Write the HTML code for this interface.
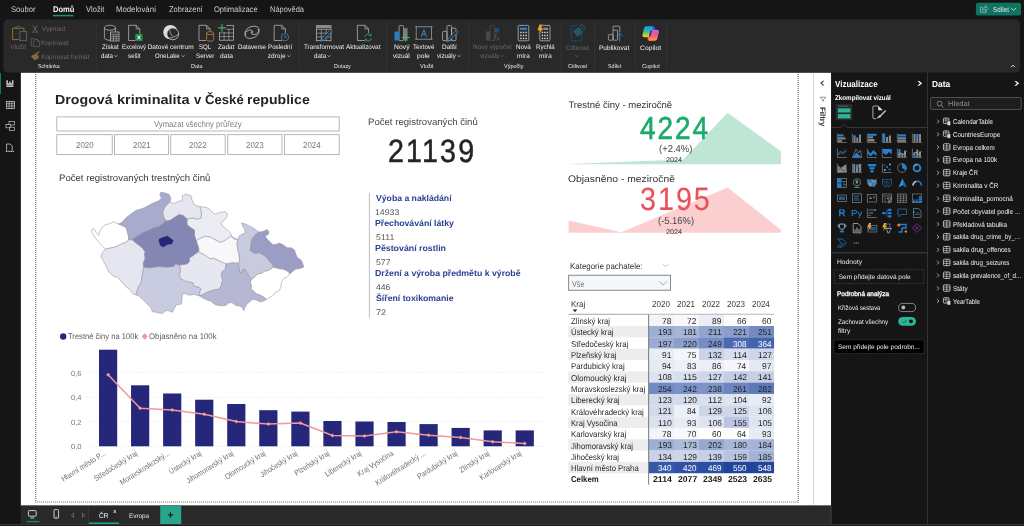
<!DOCTYPE html>
<html lang="cs">
<head>
<meta charset="utf-8">
<title>Drogová kriminalita v České republice</title>
<style>
html,body{margin:0;padding:0;}
body{width:1024px;height:526px;overflow:hidden;background:#151515;font-family:"Liberation Sans",sans-serif;position:relative;}
#app{position:absolute;left:0;top:0;width:1024px;height:526px;overflow:hidden;background:#151515;will-change:transform;}
.t{position:absolute;white-space:nowrap;display:block;text-rendering:geometricPrecision;}
.b{position:absolute;display:block;}
svg{overflow:visible;}
</style>
</head>
<body>
<div id="app">
<svg class="b" style="left:19px;top:71px;" width="795" height="436"><rect x="1.6" y="1.6" width="792.4" height="433" fill="#ffffff"/></svg>
<svg class="b" style="left:0px;top:0px;" width="1024" height="526" viewBox="0 0 1024 526"><path d="M35.7 72V502.600M798.200 72V502.600M35.200 502H798.800" fill="none" stroke="#6c6c6c" stroke-width="1.150" stroke-dasharray="1 1"/></svg>
<span class="t" style="left:55.08px;top:92px;font-size:13.1px;line-height:15px;color:#252423;font-weight:700;transform:scaleX(1.0853);transform-origin:0 50%;">Drogová</span>
<span class="t" style="left:116.56px;top:92px;font-size:13.1px;line-height:15px;color:#252423;font-weight:700;transform:scaleX(1.1068);transform-origin:0 50%;">kriminalita</span>
<span class="t" style="left:193.9px;top:92px;font-size:13.1px;line-height:15px;color:#252423;font-weight:700;">v</span>
<span class="t" style="left:204.97px;top:92px;font-size:13.1px;line-height:15px;color:#252423;font-weight:700;transform:scaleX(1.0037);transform-origin:0 50%;">České</span>
<span class="t" style="left:247.48px;top:92px;font-size:13.1px;line-height:15px;color:#252423;font-weight:700;transform:scaleX(1.0775);transform-origin:0 50%;">republice</span>
<svg class="b" style="left:55px;top:115px;" width="286" height="18"><rect x="1.8" y="1.9" width="282.4" height="14.1" fill="#fff" stroke="#a6a6a6" stroke-width="0.8"/></svg>
<span class="t" style="left:154.1px;top:119px;font-size:8.7px;line-height:10px;color:#808080;transform:scaleX(0.8845);transform-origin:0 50%;">Vymazat všechny průřezy</span>
<svg class="b" style="left:55px;top:133px;" width="59" height="23"><rect x="1.8" y="1.7" width="55.4" height="19.7" fill="#fff" stroke="#a6a6a6" stroke-width="0.8"/></svg>
<span class="t" style="left:75.6px;top:140px;font-size:8.6px;line-height:10px;color:#777;transform:scaleX(0.9237);transform-origin:0 50%;">2020</span>
<svg class="b" style="left:113px;top:133px;" width="57" height="23"><rect x="1.5" y="1.7" width="53.9" height="19.7" fill="#fff" stroke="#a6a6a6" stroke-width="0.8"/></svg>
<span class="t" style="left:132.55px;top:140px;font-size:8.6px;line-height:10px;color:#777;transform:scaleX(0.9280);transform-origin:0 50%;">2021</span>
<svg class="b" style="left:169px;top:133px;" width="58" height="23"><rect x="1.7" y="1.7" width="54.5" height="19.7" fill="#fff" stroke="#a6a6a6" stroke-width="0.8"/></svg>
<span class="t" style="left:189.05px;top:140px;font-size:8.6px;line-height:10px;color:#777;transform:scaleX(0.9280);transform-origin:0 50%;">2022</span>
<svg class="b" style="left:226px;top:133px;" width="58" height="23"><rect x="1.8" y="1.7" width="54.2" height="19.7" fill="#fff" stroke="#a6a6a6" stroke-width="0.8"/></svg>
<span class="t" style="left:246px;top:140px;font-size:8.6px;line-height:10px;color:#777;transform:scaleX(0.9259);transform-origin:0 50%;">2023</span>
<svg class="b" style="left:283px;top:133px;" width="58" height="23"><rect x="1.4" y="1.7" width="54.8" height="19.7" fill="#fff" stroke="#a6a6a6" stroke-width="0.8"/></svg>
<span class="t" style="left:302.9px;top:140px;font-size:8.6px;line-height:10px;color:#777;transform:scaleX(0.9194);transform-origin:0 50%;">2024</span>
<span class="t" style="left:58.83px;top:173px;font-size:9.5px;line-height:11px;color:#3a3a3a;transform:scaleX(1.0096);transform-origin:0 50%;">Počet registrovaných trestných činů</span>
<svg class="b" style="left:0px;top:0px;pointer-events:none;" width="1024" height="526" viewBox="0 0 1024 526"><path d="M118.5 224.0L113.7 221.7L109.6 223.7L105.5 224.7L102.1 227.4L99.4 231.5L98.7 235.4L96.6 233.2L94.9 229.9L92.9 228.5L91.2 231.3L93.2 234.3L94.9 237.7L98.0 241.1L101.4 245.2L105.5 249.0L109.6 248.2L114.4 247.3L117.8 245.9L122.0 243.6L126.1 242.2L128.8 239.7L128.5 236.3L127.4 231.5L126.1 227.4L122.0 225.4Z" fill="#ffffff" stroke="#92929c" stroke-width="0.55" stroke-linejoin="round"/><path d="M105.5 249.0L109.6 248.2L114.4 247.3L117.8 245.9L122.0 243.6L126.1 242.2L128.8 239.7L132.2 239.7L137.0 243.8L142.5 248.0L145.2 252.1L145.9 250.7L144.5 254.1L145.2 258.2L143.2 263.7L143.8 267.1L142.5 274.6L141.1 282.8L138.4 287.0L137.0 291.1L135.9 294.9L132.9 293.8L130.2 289.7L126.1 287.0L122.0 282.2L117.8 277.4L113.1 276.0L108.9 271.9L105.5 265.1L102.8 259.6L100.7 256.2L102.8 252.1Z" fill="#e5e6f0" stroke="#92929c" stroke-width="0.55" stroke-linejoin="round"/><path d="M143.8 267.1L149.3 267.8L158.9 266.4L167.1 267.1L174.0 266.4L175.3 263.7L179.4 265.1L180.8 270.5L179.4 274.6L180.8 278.7L186.3 281.5L187.7 281.5L193.2 282.8L193.9 286.3L198.7 287.0L201.4 289.0L200.1 291.1L199.4 295.8L194.5 294.5L189.0 295.2L183.5 293.1L182.2 296.5L181.5 304.1L176.7 304.7L174.0 308.8L172.6 312.3L167.1 310.2L161.6 313.6L156.2 312.3L152.1 311.6L151.4 308.2L146.6 303.4L142.5 299.3L138.4 295.8L135.9 294.9L137.0 291.1L138.4 287.0L141.1 282.8L142.5 274.6Z" fill="#c9cbe0" stroke="#92929c" stroke-width="0.55" stroke-linejoin="round"/><path d="M179.4 265.1L187.6 263.7L189.7 260.9L189.0 258.2L193.1 255.5L198.6 251.4L198.7 252.0L205.5 255.4L210.3 258.8L213.7 258.1L219.2 260.8L226.1 263.9L225.4 269.2L222.0 271.9L221.3 276.0L222.6 280.1L221.3 285.6L219.2 289.0L212.4 290.4L206.9 292.4L201.4 295.2L199.4 295.8L200.1 291.1L201.4 289.0L198.7 287.0L193.9 286.3L193.2 282.8L187.7 281.5L186.3 281.5L180.8 278.7L179.4 274.6L180.8 270.5Z" fill="#e6e7f1" stroke="#92929c" stroke-width="0.55" stroke-linejoin="round"/><path d="M198.7 252.0L198.7 247.8L195.3 241.0L200.1 238.3L205.5 236.2L210.3 236.9L215.1 239.6L220.6 242.4L226.1 239.6L230.8 236.2L234.3 238.9L237.7 239.6L237.0 244.4L237.7 249.2L239.1 254.7L239.7 260.2L238.4 263.6L237.7 263.2L231.5 262.9L226.1 263.9L219.2 260.8L213.7 258.1L210.3 258.8L205.5 255.4Z" fill="#f8f8fb" stroke="#92929c" stroke-width="0.55" stroke-linejoin="round"/><path d="M200.0 206.9L204.1 206.9L208.9 208.3L210.9 211.0L215.0 214.4L219.8 212.4L223.9 211.7L224.7 211.6L227.4 213.6L226.7 217.1L224.7 219.8L220.6 223.2L222.6 225.9L226.1 228.7L230.2 232.8L232.2 236.9L237.7 239.6L234.3 238.9L230.8 236.2L226.1 239.6L220.6 242.4L215.1 239.6L210.3 236.9L205.5 236.2L200.1 238.3L195.3 241.0L194.5 235.6L194.5 230.2L190.4 227.4L187.0 224.7L187.0 219.2L189.0 218.5L193.1 217.8L197.2 219.2L201.3 217.8L201.3 212.4Z" fill="#ecedf4" stroke="#92929c" stroke-width="0.55" stroke-linejoin="round"/><path d="M169.9 202.1L174.0 203.5L178.1 201.4L182.2 200.7L182.4 195.7L186.3 194.0L191.1 195.9L192.0 200.1L194.5 204.8L200.0 206.9L201.3 212.4L201.3 217.8L197.2 219.2L193.1 217.8L189.0 218.5L187.0 219.2L183.5 215.8L179.4 214.4L174.0 217.8L169.9 220.6L166.0 220.9L163.7 217.2L162.7 212.4L164.4 207.6L167.1 204.2Z" fill="#e5e6f0" stroke="#92929c" stroke-width="0.55" stroke-linejoin="round"/><path d="M274.0 267.1L276.0 267.8L279.4 268.7L283.5 269.2L287.6 271.2L290.1 273.9L287.6 276.7L283.5 278.7L281.5 282.2L280.8 287.0L279.4 290.4L275.3 292.4L273.3 295.2L269.9 297.2L266.4 299.5L263.7 297.2L260.3 295.2L256.2 293.8L252.7 290.4L250.7 289.0L251.4 285.6L250.0 282.8L251.4 279.4L253.4 278.1L255.5 276.0L257.5 273.9L261.6 273.3L264.4 271.2L268.5 270.5L271.2 268.5Z" fill="#ffffff" stroke="#92929c" stroke-width="0.55" stroke-linejoin="round"/><path d="M241.4 222.9L245.2 223.9L249.3 225.9L253.4 228.0L256.2 230.1L258.9 232.1L256.2 234.2L253.4 236.9L251.4 241.0L250.7 246.5L250.4 250.6L253.4 252.6L256.2 253.3L259.6 252.6L263.0 254.7L267.1 257.4L269.2 260.8L271.9 263.6L274.0 267.0L271.2 268.4L268.5 270.4L264.4 271.1L261.6 273.2L257.5 273.8L255.5 275.9L253.4 278.0L251.4 279.0L249.3 276.6L246.6 272.5L244.5 269.1L242.5 269.7L241.8 273.2L239.7 272.5L239.1 268.4L238.4 263.6L239.7 260.2L239.1 254.7L237.7 249.2L237.0 244.4L237.7 239.6L239.7 235.5L245.2 232.8L244.5 228.7L242.5 225.9Z" fill="#c8cadf" stroke="#92929c" stroke-width="0.55" stroke-linejoin="round"/><path d="M226.1 264.4L231.5 263.0L237.7 263.3L238.4 263.7L239.1 268.5L239.7 272.6L241.8 273.3L242.5 269.8L244.5 269.2L246.6 272.6L249.3 276.7L251.4 279.4L250.0 282.8L251.4 285.6L250.7 289.0L252.7 290.4L256.2 293.8L260.3 295.2L263.7 297.2L266.4 299.5L263.0 301.3L259.6 301.7L256.2 300.0L252.7 299.3L249.3 302.0L246.6 304.7L244.5 308.2L243.6 310.9L242.5 307.5L239.7 306.1L235.6 305.4L232.2 302.7L228.8 302.7L226.1 305.4L220.6 305.8L215.1 304.7L211.0 301.3L206.9 300.0L202.8 297.9L199.4 295.8L201.4 295.2L206.9 292.4L212.4 290.4L219.2 289.0L221.3 285.6L222.6 280.1L221.3 276.0L222.0 271.9L225.4 269.2Z" fill="#b5b7d5" stroke="#92929c" stroke-width="0.55" stroke-linejoin="round"/><path d="M258.9 232.1L263.0 231.4L267.1 229.4L268.8 231.4L268.5 234.2L265.1 236.2L267.1 238.9L269.9 241.7L272.6 244.4L276.0 244.4L279.4 243.1L283.5 245.1L287.0 247.8L291.1 247.8L294.5 249.9L295.6 253.3L297.2 257.4L301.3 260.2L302.7 263.6L303.8 267.0L300.0 268.4L295.9 269.1L293.1 271.1L290.1 273.8L287.6 271.1L283.5 269.1L279.4 268.6L276.0 267.7L274.0 267.0L271.9 263.6L269.2 260.8L267.1 257.4L263.0 254.7L259.6 252.6L256.2 253.3L253.4 252.6L250.4 250.6L250.7 246.5L251.4 241.0L253.4 236.9L256.2 234.2Z" fill="#9b9dc4" stroke="#92929c" stroke-width="0.55" stroke-linejoin="round"/><path d="M118.5 224.0L122.0 222.2L126.1 217.8L130.2 214.4L136.3 210.3L142.5 208.5L147.3 206.2L152.1 203.5L158.9 200.7L161.6 198.0L159.6 194.9L161.0 192.1L165.7 193.2L169.2 194.6L170.9 198.7L169.9 202.1L167.1 204.2L164.4 207.6L162.7 212.4L163.7 217.2L166.0 220.9L162.3 224.0L158.9 226.7L153.4 228.1L149.3 229.9L142.5 232.9L137.0 236.3L132.2 239.7L128.8 239.7L128.5 236.3L127.4 231.5L126.1 227.4L122.0 225.4Z" fill="#a9abcd" stroke="#92929c" stroke-width="0.55" stroke-linejoin="round"/><path d="M132.2 239.7L137.0 236.3L142.5 232.9L149.3 229.9L153.4 228.1L158.9 226.7L162.3 224.0L166.0 220.9L169.9 220.6L174.0 217.8L179.4 214.4L183.5 215.8L187.0 219.2L187.0 224.7L190.4 227.4L194.5 230.2L194.5 235.6L195.9 239.7L197.9 245.2L198.9 249.3L198.6 251.4L193.1 255.5L189.0 258.2L189.7 260.9L187.6 263.7L179.4 265.1L175.3 263.7L174.0 266.4L167.1 267.1L158.9 266.4L149.3 267.8L143.8 267.1L143.2 263.7L145.2 258.2L144.5 254.1L145.9 250.7L145.2 252.1L142.5 248.0L137.0 243.8Z" fill="#8486b4" stroke="#92929c" stroke-width="0.55" stroke-linejoin="round"/><path d="M158.6 238.7L162.6 237.1L167.4 235.5L170.6 237.9L173.8 240.3L172.2 244.3L167.4 245.1L163.4 247.5L160.2 245.9L158.6 241.9Z" fill="#25257a" stroke="#92929c" stroke-width="0.55" stroke-linejoin="round"/></svg>
<span class="t" style="left:368.23px;top:117px;font-size:9.5px;line-height:11px;color:#444;transform:scaleX(1.0093);transform-origin:0 50%;">Počet registrovaných činů</span>
<span class="t" style="left:387.67px;top:133px;font-size:32.4px;line-height:36px;color:#252423;letter-spacing:2.4px;transform:scaleX(0.8857);transform-origin:0 50%;-webkit-text-stroke:0.5px #252423;">21139</span>
<svg class="b" style="left:367px;top:192px;" width="4" height="127"><rect x="1.9" y="1.2" width="0.9" height="124.7" fill="#b8b8b8"/></svg>
<span class="t" style="left:375.96px;top:193px;font-size:8.6px;line-height:10px;color:#2b4192;font-weight:700;transform:scaleX(1.0073);transform-origin:0 50%;">Výoba a nakládání</span>
<span class="t" style="left:375.34px;top:208px;font-size:8.2px;line-height:9px;color:#555;transform:scaleX(1.0662);transform-origin:0 50%;">14933</span>
<span class="t" style="left:375.43px;top:218px;font-size:8.6px;line-height:10px;color:#2b4192;font-weight:700;transform:scaleX(1.0135);transform-origin:0 50%;">Přechovávání látky</span>
<span class="t" style="left:375.65px;top:233px;font-size:8.2px;line-height:9px;color:#555;transform:scaleX(1.0786);transform-origin:0 50%;">5111</span>
<span class="t" style="left:375.43px;top:243px;font-size:8.6px;line-height:10px;color:#2b4192;font-weight:700;transform:scaleX(1.0250);transform-origin:0 50%;">Pěstování rostlin</span>
<span class="t" style="left:375.65px;top:258px;font-size:8.2px;line-height:9px;color:#555;transform:scaleX(1.0574);transform-origin:0 50%;">577</span>
<span class="t" style="left:375.43px;top:268px;font-size:8.6px;line-height:10px;color:#2b4192;font-weight:700;transform:scaleX(1.0158);transform-origin:0 50%;">Držení a výroba předmětu k výrobě</span>
<span class="t" style="left:375.83px;top:283px;font-size:8.2px;line-height:9px;color:#555;transform:scaleX(1.0562);transform-origin:0 50%;">446</span>
<span class="t" style="left:375.78px;top:293px;font-size:8.6px;line-height:10px;color:#2b4192;font-weight:700;transform:scaleX(1.0147);transform-origin:0 50%;">Šíření toxikomanie</span>
<span class="t" style="left:375.54px;top:308px;font-size:8.2px;line-height:9px;color:#555;transform:scaleX(1.1174);transform-origin:0 50%;">72</span>
<svg class="b" style="left:0px;top:0px;" width="1024" height="526" viewBox="0 0 1024 526"><path d="M568.6 164L683.4 159.4L727.6 112.8L780.9 151.3V164.2H568.6z" fill="#bfe6d4"/><path d="M568.6 220.6L621.3 232.2L727.6 187.5L780.9 229.7V232.7H568.6z" fill="#fbcfd0"/></svg>
<span class="t" style="left:568.41px;top:100px;font-size:9.5px;line-height:11px;color:#333;">Trestné činy - meziročně</span>
<span class="t" style="left:640.44px;top:110px;font-size:31.8px;line-height:36px;color:#1aab6b;letter-spacing:2.2px;transform:scaleX(0.8811);transform-origin:0 50%;-webkit-text-stroke:0.6px #1aab6b;">4224</span>
<span class="t" style="left:659.03px;top:144px;font-size:10px;line-height:11px;color:#444;transform:scaleX(0.9443);transform-origin:0 50%;">(+2.4%)</span>
<span class="t" style="left:666.44px;top:157px;font-size:6.8px;line-height:7px;color:#333;transform:scaleX(1.0670);transform-origin:0 50%;">2024</span>
<span class="t" style="left:568.13px;top:174px;font-size:9.5px;line-height:11px;color:#333;transform:scaleX(1.0891);transform-origin:0 50%;">Objasněno - meziročně</span>
<span class="t" style="left:639.59px;top:181px;font-size:32.2px;line-height:36px;color:#e8505b;letter-spacing:2.2px;transform:scaleX(0.8928);transform-origin:0 50%;-webkit-text-stroke:0.15px #e8505b;">3195</span>
<span class="t" style="left:657.74px;top:216px;font-size:10px;line-height:11px;color:#444;transform:scaleX(0.9394);transform-origin:0 50%;">(-5.16%)</span>
<span class="t" style="left:666.44px;top:229px;font-size:6.8px;line-height:7px;color:#333;transform:scaleX(1.0670);transform-origin:0 50%;">2024</span>
<span class="t" style="left:569.77px;top:261px;font-size:8.6px;line-height:10px;color:#333;transform:scaleX(0.9207);transform-origin:0 50%;">Kategorie pachatele:</span>
<svg class="b" style="left:661px;top:262px;" width="9" height="6" viewBox="0 0 9 6"><path d="M1.800 2L4.700 4.500L7.600 2" fill="none" stroke="#888" stroke-width="0.500"/></svg>
<svg class="b" style="left:567px;top:273px;" width="105" height="19"><rect x="1.65" y="2.25" width="101.8" height="15" fill="#f4f8fb" stroke="#7c7c7c" stroke-width="0.9"/></svg>
<span class="t" style="left:571.8px;top:279px;font-size:8.6px;line-height:10px;color:#777;transform:scaleX(0.8375);transform-origin:0 50%;">Vše</span>
<svg class="b" style="left:658px;top:279px;" width="10" height="8" viewBox="0 0 10 8"><path d="M1.400 2.300L5.100 6.100L8.900 2.300" fill="none" stroke="#777" stroke-width="0.600"/></svg>
<span class="t" style="left:570.96px;top:299px;font-size:8.7px;line-height:10px;color:#333;transform:scaleX(0.9167);transform-origin:0 50%;">Kraj</span>
<svg class="b" style="left:571.5px;top:308.8px;" width="6" height="4" viewBox="0 0 6 4"><path d="M0.700 0.600H5.300L3 3.200z" fill="#222"/></svg>
<span class="t" style="left:652px;top:299px;font-size:8.7px;line-height:10px;color:#3a3a3a;transform:scaleX(0.9238);transform-origin:0 50%;">2020</span>
<span class="t" style="left:677px;top:299px;font-size:8.7px;line-height:10px;color:#3a3a3a;transform:scaleX(0.9282);transform-origin:0 50%;">2021</span>
<span class="t" style="left:702px;top:299px;font-size:8.7px;line-height:10px;color:#3a3a3a;transform:scaleX(0.9282);transform-origin:0 50%;">2022</span>
<span class="t" style="left:727px;top:299px;font-size:8.7px;line-height:10px;color:#3a3a3a;transform:scaleX(0.9260);transform-origin:0 50%;">2023</span>
<span class="t" style="left:752px;top:299px;font-size:8.7px;line-height:10px;color:#3a3a3a;transform:scaleX(0.9195);transform-origin:0 50%;">2024</span>
<svg class="b" style="left:567px;top:312px;" width="209" height="4"><rect x="1.6" y="1.8" width="205.6" height="0.9" fill="#999999"/></svg>
<span class="t" style="left:571.37px;top:316px;font-size:8.5px;line-height:10px;color:#2a2a2a;transform:scaleX(0.9084);transform-origin:0 50%;">Zlínský kraj</span>
<svg class="b" style="left:648px;top:313px;" width="28" height="15"><rect x="1" y="1.7" width="25.05" height="11.37" fill="#f2f4f9"/></svg>
<span class="t" style="left:662.38px;top:316px;font-size:8.5px;line-height:10px;color:#252423;transform:scaleX(0.9919);transform-origin:0 50%;">78</span>
<svg class="b" style="left:673px;top:313px;" width="28" height="15"><rect x="1" y="1.7" width="25.05" height="11.37" fill="#f6f8fb"/></svg>
<span class="t" style="left:687.38px;top:316px;font-size:8.5px;line-height:10px;color:#252423;transform:scaleX(0.9968);transform-origin:0 50%;">72</span>
<svg class="b" style="left:698px;top:313px;" width="28" height="15"><rect x="1" y="1.7" width="25.05" height="11.37" fill="#eaedf6"/></svg>
<span class="t" style="left:712.46px;top:316px;font-size:8.5px;line-height:10px;color:#252423;transform:scaleX(0.9871);transform-origin:0 50%;">89</span>
<svg class="b" style="left:723px;top:313px;" width="28" height="15"><rect x="1" y="1.7" width="25.05" height="11.37" fill="#fbfbfd"/></svg>
<span class="t" style="left:737.38px;top:316px;font-size:8.5px;line-height:10px;color:#252423;transform:scaleX(0.9919);transform-origin:0 50%;">66</span>
<svg class="b" style="left:748px;top:313px;" width="28" height="15"><rect x="1" y="1.7" width="25.05" height="11.37" fill="#ffffff"/></svg>
<span class="t" style="left:762.38px;top:316px;font-size:8.5px;line-height:10px;color:#252423;transform:scaleX(0.9871);transform-origin:0 50%;">60</span>
<svg class="b" style="left:567px;top:325px;" width="83" height="14"><rect x="1.3" y="1.02" width="80.3" height="11.32" fill="#ededed"/></svg>
<span class="t" style="left:571.01px;top:327px;font-size:8.5px;line-height:10px;color:#2a2a2a;transform:scaleX(0.9181);transform-origin:0 50%;">Ústecký kraj</span>
<svg class="b" style="left:648px;top:325px;" width="28" height="14"><rect x="1" y="1.02" width="25.05" height="11.37" fill="#9eafd5"/></svg>
<span class="t" style="left:657.77px;top:327px;font-size:8.5px;line-height:10px;color:#252423;transform:scaleX(0.9867);transform-origin:0 50%;">193</span>
<svg class="b" style="left:673px;top:325px;" width="28" height="14"><rect x="1" y="1.02" width="25.05" height="11.37" fill="#a7b6d8"/></svg>
<span class="t" style="left:682.77px;top:327px;font-size:8.5px;line-height:10px;color:#252423;transform:scaleX(0.9899);transform-origin:0 50%;">181</span>
<svg class="b" style="left:698px;top:325px;" width="28" height="14"><rect x="1" y="1.02" width="25.05" height="11.37" fill="#91a4cf"/></svg>
<span class="t" style="left:707.97px;top:327px;font-size:8.5px;line-height:10px;color:#252423;transform:scaleX(1.0196);transform-origin:0 50%;">211</span>
<svg class="b" style="left:723px;top:325px;" width="28" height="14"><rect x="1" y="1.02" width="25.05" height="11.37" fill="#899ecc"/></svg>
<span class="t" style="left:732.99px;top:327px;font-size:8.5px;line-height:10px;color:#252423;transform:scaleX(0.9741);transform-origin:0 50%;">221</span>
<svg class="b" style="left:748px;top:325px;" width="28" height="14"><rect x="1" y="1.02" width="25.05" height="11.37" fill="#748bc2"/></svg>
<span class="t" style="left:757.99px;top:327px;font-size:8.5px;line-height:10px;color:#252423;transform:scaleX(0.9741);transform-origin:0 50%;">251</span>
<span class="t" style="left:571.25px;top:339px;font-size:8.5px;line-height:10px;color:#2a2a2a;transform:scaleX(0.9131);transform-origin:0 50%;">Středočeský kraj</span>
<svg class="b" style="left:648px;top:336px;" width="28" height="14"><rect x="1" y="1.34" width="25.05" height="11.37" fill="#9bacd3"/></svg>
<span class="t" style="left:657.77px;top:339px;font-size:8.5px;line-height:10px;color:#252423;transform:scaleX(0.9899);transform-origin:0 50%;">197</span>
<svg class="b" style="left:673px;top:336px;" width="28" height="14"><rect x="1" y="1.34" width="25.05" height="11.37" fill="#8a9ecc"/></svg>
<span class="t" style="left:682.99px;top:339px;font-size:8.5px;line-height:10px;color:#252423;transform:scaleX(0.9680);transform-origin:0 50%;">220</span>
<svg class="b" style="left:698px;top:336px;" width="28" height="14"><rect x="1" y="1.34" width="25.05" height="11.37" fill="#758dc3"/></svg>
<span class="t" style="left:707.99px;top:339px;font-size:8.5px;line-height:10px;color:#252423;transform:scaleX(0.9741);transform-origin:0 50%;">249</span>
<svg class="b" style="left:723px;top:336px;" width="28" height="14"><rect x="1" y="1.34" width="25.05" height="11.37" fill="#4a69b0"/></svg>
<span class="t" style="left:733.11px;top:339px;font-size:8.5px;line-height:10px;color:#fff;transform:scaleX(0.9619);transform-origin:0 50%;">308</span>
<svg class="b" style="left:748px;top:336px;" width="28" height="14"><rect x="1" y="1.34" width="25.05" height="11.37" fill="#4364ac"/></svg>
<span class="t" style="left:758.12px;top:339px;font-size:8.5px;line-height:10px;color:#fff;transform:scaleX(0.9529);transform-origin:0 50%;">364</span>
<svg class="b" style="left:567px;top:347px;" width="83" height="14"><rect x="1.3" y="1.66" width="80.3" height="11.32" fill="#ededed"/></svg>
<span class="t" style="left:570.98px;top:350px;font-size:8.5px;line-height:10px;color:#2a2a2a;transform:scaleX(0.9072);transform-origin:0 50%;">Plzeňský kraj</span>
<svg class="b" style="left:648px;top:347px;" width="28" height="15"><rect x="1" y="1.66" width="25.05" height="11.37" fill="#e8ecf5"/></svg>
<span class="t" style="left:662.42px;top:350px;font-size:8.5px;line-height:10px;color:#252423;transform:scaleX(0.9919);transform-origin:0 50%;">91</span>
<svg class="b" style="left:673px;top:347px;" width="28" height="15"><rect x="1" y="1.66" width="25.05" height="11.37" fill="#f4f6fa"/></svg>
<span class="t" style="left:687.38px;top:350px;font-size:8.5px;line-height:10px;color:#252423;transform:scaleX(0.9919);transform-origin:0 50%;">75</span>
<svg class="b" style="left:698px;top:347px;" width="28" height="15"><rect x="1" y="1.66" width="25.05" height="11.37" fill="#cad3e8"/></svg>
<span class="t" style="left:707.77px;top:350px;font-size:8.5px;line-height:10px;color:#252423;transform:scaleX(0.9899);transform-origin:0 50%;">132</span>
<svg class="b" style="left:723px;top:347px;" width="28" height="15"><rect x="1" y="1.66" width="25.05" height="11.37" fill="#d8deee"/></svg>
<span class="t" style="left:732.75px;top:350px;font-size:8.5px;line-height:10px;color:#252423;transform:scaleX(1.0230);transform-origin:0 50%;">114</span>
<svg class="b" style="left:748px;top:347px;" width="28" height="15"><rect x="1" y="1.66" width="25.05" height="11.37" fill="#ced6ea"/></svg>
<span class="t" style="left:757.77px;top:350px;font-size:8.5px;line-height:10px;color:#252423;transform:scaleX(0.9899);transform-origin:0 50%;">127</span>
<span class="t" style="left:570.97px;top:361px;font-size:8.5px;line-height:10px;color:#2a2a2a;transform:scaleX(0.9232);transform-origin:0 50%;">Pardubický kraj</span>
<svg class="b" style="left:648px;top:358px;" width="28" height="15"><rect x="1" y="1.98" width="25.05" height="11.37" fill="#e6eaf4"/></svg>
<span class="t" style="left:662.43px;top:361px;font-size:8.5px;line-height:10px;color:#252423;transform:scaleX(0.9729);transform-origin:0 50%;">94</span>
<svg class="b" style="left:673px;top:358px;" width="28" height="15"><rect x="1" y="1.98" width="25.05" height="11.37" fill="#eef1f8"/></svg>
<span class="t" style="left:687.47px;top:361px;font-size:8.5px;line-height:10px;color:#252423;transform:scaleX(0.9823);transform-origin:0 50%;">83</span>
<svg class="b" style="left:698px;top:358px;" width="28" height="15"><rect x="1" y="1.98" width="25.05" height="11.37" fill="#eceff7"/></svg>
<span class="t" style="left:712.47px;top:361px;font-size:8.5px;line-height:10px;color:#252423;transform:scaleX(0.9823);transform-origin:0 50%;">86</span>
<svg class="b" style="left:723px;top:358px;" width="28" height="15"><rect x="1" y="1.98" width="25.05" height="11.37" fill="#f5f7fb"/></svg>
<span class="t" style="left:737.38px;top:361px;font-size:8.5px;line-height:10px;color:#252423;transform:scaleX(0.9776);transform-origin:0 50%;">74</span>
<svg class="b" style="left:748px;top:358px;" width="28" height="15"><rect x="1" y="1.98" width="25.05" height="11.37" fill="#e4e9f3"/></svg>
<span class="t" style="left:762.42px;top:361px;font-size:8.5px;line-height:10px;color:#252423;transform:scaleX(0.9919);transform-origin:0 50%;">97</span>
<svg class="b" style="left:567px;top:370px;" width="83" height="14"><rect x="1.3" y="1.3" width="80.3" height="11.32" fill="#ededed"/></svg>
<span class="t" style="left:571.24px;top:373px;font-size:8.5px;line-height:10px;color:#2a2a2a;transform:scaleX(0.9474);transform-origin:0 50%;">Olomoucký kraj</span>
<svg class="b" style="left:648px;top:370px;" width="28" height="14"><rect x="1" y="1.3" width="25.05" height="11.37" fill="#dce2f0"/></svg>
<span class="t" style="left:657.77px;top:372px;font-size:8.5px;line-height:10px;color:#252423;transform:scaleX(0.9867);transform-origin:0 50%;">108</span>
<svg class="b" style="left:673px;top:370px;" width="28" height="14"><rect x="1" y="1.3" width="25.05" height="11.37" fill="#d7deed"/></svg>
<span class="t" style="left:682.74px;top:372px;font-size:8.5px;line-height:10px;color:#252423;transform:scaleX(1.0334);transform-origin:0 50%;">115</span>
<svg class="b" style="left:698px;top:370px;" width="28" height="14"><rect x="1" y="1.3" width="25.05" height="11.37" fill="#ced6ea"/></svg>
<span class="t" style="left:707.77px;top:372px;font-size:8.5px;line-height:10px;color:#252423;transform:scaleX(0.9899);transform-origin:0 50%;">127</span>
<svg class="b" style="left:723px;top:370px;" width="28" height="14"><rect x="1" y="1.3" width="25.05" height="11.37" fill="#c3cde5"/></svg>
<span class="t" style="left:732.77px;top:372px;font-size:8.5px;line-height:10px;color:#252423;transform:scaleX(0.9899);transform-origin:0 50%;">142</span>
<svg class="b" style="left:748px;top:370px;" width="28" height="14"><rect x="1" y="1.3" width="25.05" height="11.37" fill="#c4cee5"/></svg>
<span class="t" style="left:757.77px;top:372px;font-size:8.5px;line-height:10px;color:#252423;transform:scaleX(0.9899);transform-origin:0 50%;">141</span>
<span class="t" style="left:570.97px;top:384px;font-size:8.5px;line-height:10px;color:#2a2a2a;transform:scaleX(0.9193);transform-origin:0 50%;">Moravskoslezský kraj</span>
<svg class="b" style="left:648px;top:381px;" width="28" height="14"><rect x="1" y="1.62" width="25.05" height="11.37" fill="#718ac1"/></svg>
<span class="t" style="left:657.99px;top:384px;font-size:8.5px;line-height:10px;color:#252423;transform:scaleX(0.9619);transform-origin:0 50%;">254</span>
<svg class="b" style="left:673px;top:381px;" width="28" height="14"><rect x="1" y="1.62" width="25.05" height="11.37" fill="#7a91c5"/></svg>
<span class="t" style="left:682.99px;top:384px;font-size:8.5px;line-height:10px;color:#252423;transform:scaleX(0.9741);transform-origin:0 50%;">242</span>
<svg class="b" style="left:698px;top:381px;" width="28" height="14"><rect x="1" y="1.62" width="25.05" height="11.37" fill="#7d93c6"/></svg>
<span class="t" style="left:707.99px;top:384px;font-size:8.5px;line-height:10px;color:#252423;transform:scaleX(0.9711);transform-origin:0 50%;">238</span>
<svg class="b" style="left:723px;top:381px;" width="28" height="14"><rect x="1" y="1.62" width="25.05" height="11.37" fill="#6c85bf"/></svg>
<span class="t" style="left:732.99px;top:384px;font-size:8.5px;line-height:10px;color:#252423;transform:scaleX(0.9741);transform-origin:0 50%;">261</span>
<svg class="b" style="left:748px;top:381px;" width="28" height="14"><rect x="1" y="1.62" width="25.05" height="11.37" fill="#5d79b8"/></svg>
<span class="t" style="left:757.99px;top:384px;font-size:8.5px;line-height:10px;color:#252423;transform:scaleX(0.9741);transform-origin:0 50%;">282</span>
<svg class="b" style="left:567px;top:392px;" width="83" height="15"><rect x="1.3" y="1.94" width="80.3" height="11.32" fill="#ededed"/></svg>
<span class="t" style="left:570.97px;top:395px;font-size:8.5px;line-height:10px;color:#2a2a2a;transform:scaleX(0.9263);transform-origin:0 50%;">Liberecký kraj</span>
<svg class="b" style="left:648px;top:392px;" width="28" height="15"><rect x="1" y="1.94" width="25.05" height="11.37" fill="#d1d9eb"/></svg>
<span class="t" style="left:657.77px;top:395px;font-size:8.5px;line-height:10px;color:#252423;transform:scaleX(0.9867);transform-origin:0 50%;">123</span>
<svg class="b" style="left:673px;top:392px;" width="28" height="15"><rect x="1" y="1.94" width="25.05" height="11.37" fill="#d3dbec"/></svg>
<span class="t" style="left:682.77px;top:395px;font-size:8.5px;line-height:10px;color:#252423;transform:scaleX(0.9835);transform-origin:0 50%;">120</span>
<svg class="b" style="left:698px;top:392px;" width="28" height="15"><rect x="1" y="1.94" width="25.05" height="11.37" fill="#d9e0ee"/></svg>
<span class="t" style="left:707.74px;top:395px;font-size:8.5px;line-height:10px;color:#252423;transform:scaleX(1.0369);transform-origin:0 50%;">112</span>
<svg class="b" style="left:723px;top:392px;" width="28" height="15"><rect x="1" y="1.94" width="25.05" height="11.37" fill="#dfe4f1"/></svg>
<span class="t" style="left:732.78px;top:395px;font-size:8.5px;line-height:10px;color:#252423;transform:scaleX(0.9773);transform-origin:0 50%;">104</span>
<svg class="b" style="left:748px;top:392px;" width="28" height="15"><rect x="1" y="1.94" width="25.05" height="11.37" fill="#e8ecf5"/></svg>
<span class="t" style="left:762.42px;top:395px;font-size:8.5px;line-height:10px;color:#252423;transform:scaleX(0.9919);transform-origin:0 50%;">92</span>
<span class="t" style="left:570.98px;top:407px;font-size:8.5px;line-height:10px;color:#2a2a2a;transform:scaleX(0.9179);transform-origin:0 50%;">Královéhradecký kraj</span>
<svg class="b" style="left:648px;top:404px;" width="28" height="14"><rect x="1" y="1.26" width="25.05" height="11.37" fill="#d2daec"/></svg>
<span class="t" style="left:657.77px;top:406px;font-size:8.5px;line-height:10px;color:#252423;transform:scaleX(0.9899);transform-origin:0 50%;">121</span>
<svg class="b" style="left:673px;top:404px;" width="28" height="14"><rect x="1" y="1.26" width="25.05" height="11.37" fill="#edf0f7"/></svg>
<span class="t" style="left:687.47px;top:406px;font-size:8.5px;line-height:10px;color:#252423;transform:scaleX(0.9682);transform-origin:0 50%;">84</span>
<svg class="b" style="left:698px;top:404px;" width="28" height="14"><rect x="1" y="1.26" width="25.05" height="11.37" fill="#cdd5e9"/></svg>
<span class="t" style="left:707.77px;top:406px;font-size:8.5px;line-height:10px;color:#252423;transform:scaleX(0.9899);transform-origin:0 50%;">129</span>
<svg class="b" style="left:723px;top:404px;" width="28" height="14"><rect x="1" y="1.26" width="25.05" height="11.37" fill="#d0d8ea"/></svg>
<span class="t" style="left:732.77px;top:406px;font-size:8.5px;line-height:10px;color:#252423;transform:scaleX(0.9867);transform-origin:0 50%;">125</span>
<svg class="b" style="left:748px;top:404px;" width="28" height="14"><rect x="1" y="1.26" width="25.05" height="11.37" fill="#dde3f0"/></svg>
<span class="t" style="left:757.77px;top:406px;font-size:8.5px;line-height:10px;color:#252423;transform:scaleX(0.9867);transform-origin:0 50%;">106</span>
<svg class="b" style="left:567px;top:415px;" width="83" height="14"><rect x="1.3" y="1.58" width="80.3" height="11.32" fill="#ededed"/></svg>
<span class="t" style="left:570.99px;top:418px;font-size:8.5px;line-height:10px;color:#2a2a2a;transform:scaleX(0.9000);transform-origin:0 50%;">Kraj Vysočina</span>
<svg class="b" style="left:648px;top:415px;" width="28" height="14"><rect x="1" y="1.58" width="25.05" height="11.37" fill="#dbe1ef"/></svg>
<span class="t" style="left:657.74px;top:418px;font-size:8.5px;line-height:10px;color:#252423;transform:scaleX(1.0299);transform-origin:0 50%;">110</span>
<svg class="b" style="left:673px;top:415px;" width="28" height="14"><rect x="1" y="1.58" width="25.05" height="11.37" fill="#e7ebf4"/></svg>
<span class="t" style="left:687.42px;top:418px;font-size:8.5px;line-height:10px;color:#252423;transform:scaleX(0.9871);transform-origin:0 50%;">93</span>
<svg class="b" style="left:698px;top:415px;" width="28" height="14"><rect x="1" y="1.58" width="25.05" height="11.37" fill="#dde3f0"/></svg>
<span class="t" style="left:707.77px;top:418px;font-size:8.5px;line-height:10px;color:#252423;transform:scaleX(0.9867);transform-origin:0 50%;">106</span>
<svg class="b" style="left:723px;top:415px;" width="28" height="14"><rect x="1" y="1.58" width="25.05" height="11.37" fill="#bac6e1"/></svg>
<span class="t" style="left:732.77px;top:418px;font-size:8.5px;line-height:10px;color:#252423;transform:scaleX(0.9867);transform-origin:0 50%;">155</span>
<svg class="b" style="left:748px;top:415px;" width="28" height="14"><rect x="1" y="1.58" width="25.05" height="11.37" fill="#dee4f1"/></svg>
<span class="t" style="left:757.77px;top:418px;font-size:8.5px;line-height:10px;color:#252423;transform:scaleX(0.9867);transform-origin:0 50%;">105</span>
<span class="t" style="left:570.98px;top:429px;font-size:8.5px;line-height:10px;color:#2a2a2a;transform:scaleX(0.9155);transform-origin:0 50%;">Karlovarský kraj</span>
<svg class="b" style="left:648px;top:426px;" width="28" height="15"><rect x="1" y="1.9" width="25.05" height="11.37" fill="#f2f4f9"/></svg>
<span class="t" style="left:662.38px;top:429px;font-size:8.5px;line-height:10px;color:#252423;transform:scaleX(0.9919);transform-origin:0 50%;">78</span>
<svg class="b" style="left:673px;top:426px;" width="28" height="15"><rect x="1" y="1.9" width="25.05" height="11.37" fill="#f8f9fc"/></svg>
<span class="t" style="left:687.38px;top:429px;font-size:8.5px;line-height:10px;color:#252423;transform:scaleX(0.9871);transform-origin:0 50%;">70</span>
<svg class="b" style="left:698px;top:426px;" width="28" height="15"><rect x="1" y="1.9" width="25.05" height="11.37" fill="#ffffff"/></svg>
<span class="t" style="left:712.38px;top:429px;font-size:8.5px;line-height:10px;color:#252423;transform:scaleX(0.9871);transform-origin:0 50%;">60</span>
<svg class="b" style="left:723px;top:426px;" width="28" height="15"><rect x="1" y="1.9" width="25.05" height="11.37" fill="#fcfdfe"/></svg>
<span class="t" style="left:737.38px;top:429px;font-size:8.5px;line-height:10px;color:#252423;transform:scaleX(0.9776);transform-origin:0 50%;">64</span>
<svg class="b" style="left:748px;top:426px;" width="28" height="15"><rect x="1" y="1.9" width="25.05" height="11.37" fill="#e7ebf4"/></svg>
<span class="t" style="left:762.42px;top:429px;font-size:8.5px;line-height:10px;color:#252423;transform:scaleX(0.9871);transform-origin:0 50%;">93</span>
<svg class="b" style="left:567px;top:438px;" width="83" height="14"><rect x="1.3" y="1.22" width="80.3" height="11.32" fill="#ededed"/></svg>
<span class="t" style="left:571.48px;top:441px;font-size:8.5px;line-height:10px;color:#2a2a2a;transform:scaleX(0.9121);transform-origin:0 50%;">Jihomoravský kraj</span>
<svg class="b" style="left:648px;top:438px;" width="28" height="14"><rect x="1" y="1.22" width="25.05" height="11.37" fill="#9eafd5"/></svg>
<span class="t" style="left:657.77px;top:440px;font-size:8.5px;line-height:10px;color:#252423;transform:scaleX(0.9867);transform-origin:0 50%;">193</span>
<svg class="b" style="left:673px;top:438px;" width="28" height="14"><rect x="1" y="1.22" width="25.05" height="11.37" fill="#adbbdb"/></svg>
<span class="t" style="left:682.77px;top:440px;font-size:8.5px;line-height:10px;color:#252423;transform:scaleX(0.9867);transform-origin:0 50%;">173</span>
<svg class="b" style="left:698px;top:438px;" width="28" height="14"><rect x="1" y="1.22" width="25.05" height="11.37" fill="#97a9d2"/></svg>
<span class="t" style="left:707.99px;top:440px;font-size:8.5px;line-height:10px;color:#252423;transform:scaleX(0.9741);transform-origin:0 50%;">202</span>
<svg class="b" style="left:723px;top:438px;" width="28" height="14"><rect x="1" y="1.22" width="25.05" height="11.37" fill="#a7b6d9"/></svg>
<span class="t" style="left:732.77px;top:440px;font-size:8.5px;line-height:10px;color:#252423;transform:scaleX(0.9835);transform-origin:0 50%;">180</span>
<svg class="b" style="left:748px;top:438px;" width="28" height="14"><rect x="1" y="1.22" width="25.05" height="11.37" fill="#a4b4d8"/></svg>
<span class="t" style="left:757.78px;top:440px;font-size:8.5px;line-height:10px;color:#252423;transform:scaleX(0.9773);transform-origin:0 50%;">184</span>
<span class="t" style="left:571.49px;top:452px;font-size:8.5px;line-height:10px;color:#2a2a2a;transform:scaleX(0.8994);transform-origin:0 50%;">Jihočeský kraj</span>
<svg class="b" style="left:648px;top:449px;" width="28" height="14"><rect x="1" y="1.54" width="25.05" height="11.37" fill="#c9d2e7"/></svg>
<span class="t" style="left:657.78px;top:452px;font-size:8.5px;line-height:10px;color:#252423;transform:scaleX(0.9773);transform-origin:0 50%;">134</span>
<svg class="b" style="left:673px;top:449px;" width="28" height="14"><rect x="1" y="1.54" width="25.05" height="11.37" fill="#cdd5e9"/></svg>
<span class="t" style="left:682.77px;top:452px;font-size:8.5px;line-height:10px;color:#252423;transform:scaleX(0.9899);transform-origin:0 50%;">129</span>
<svg class="b" style="left:698px;top:449px;" width="28" height="14"><rect x="1" y="1.54" width="25.05" height="11.37" fill="#c5cfe6"/></svg>
<span class="t" style="left:707.77px;top:452px;font-size:8.5px;line-height:10px;color:#252423;transform:scaleX(0.9899);transform-origin:0 50%;">139</span>
<svg class="b" style="left:723px;top:449px;" width="28" height="14"><rect x="1" y="1.54" width="25.05" height="11.37" fill="#b7c3df"/></svg>
<span class="t" style="left:732.77px;top:452px;font-size:8.5px;line-height:10px;color:#252423;transform:scaleX(0.9899);transform-origin:0 50%;">159</span>
<svg class="b" style="left:748px;top:449px;" width="28" height="14"><rect x="1" y="1.54" width="25.05" height="11.37" fill="#a4b3d7"/></svg>
<span class="t" style="left:757.77px;top:452px;font-size:8.5px;line-height:10px;color:#252423;transform:scaleX(0.9867);transform-origin:0 50%;">185</span>
<svg class="b" style="left:567px;top:460px;" width="83" height="15"><rect x="1.3" y="1.86" width="80.3" height="11.32" fill="#ededed"/></svg>
<span class="t" style="left:570.98px;top:463px;font-size:8.5px;line-height:10px;color:#2a2a2a;transform:scaleX(0.9068);transform-origin:0 50%;">Hlavní město Praha</span>
<svg class="b" style="left:648px;top:460px;" width="28" height="15"><rect x="1" y="1.86" width="25.05" height="11.37" fill="#3558a8"/></svg>
<span class="t" style="left:658.11px;top:463px;font-size:8.5px;line-height:10px;color:#fff;transform:scaleX(0.9589);transform-origin:0 50%;">340</span>
<svg class="b" style="left:673px;top:460px;" width="28" height="15"><rect x="1" y="1.86" width="25.05" height="11.37" fill="#2f52a4"/></svg>
<span class="t" style="left:683.24px;top:463px;font-size:8.5px;line-height:10px;color:#fff;transform:scaleX(0.9499);transform-origin:0 50%;">420</span>
<svg class="b" style="left:698px;top:460px;" width="28" height="15"><rect x="1" y="1.86" width="25.05" height="11.37" fill="#2c4fa3"/></svg>
<span class="t" style="left:708.24px;top:463px;font-size:8.5px;line-height:10px;color:#fff;transform:scaleX(0.9559);transform-origin:0 50%;">469</span>
<svg class="b" style="left:723px;top:460px;" width="28" height="15"><rect x="1" y="1.86" width="25.05" height="11.37" fill="#21449b"/></svg>
<span class="t" style="left:733.07px;top:463px;font-size:8.5px;line-height:10px;color:#fff;transform:scaleX(0.9619);transform-origin:0 50%;">550</span>
<svg class="b" style="left:748px;top:460px;" width="28" height="15"><rect x="1" y="1.86" width="25.05" height="11.37" fill="#22459c"/></svg>
<span class="t" style="left:758.07px;top:463px;font-size:8.5px;line-height:10px;color:#fff;transform:scaleX(0.9649);transform-origin:0 50%;">548</span>
<span class="t" style="left:571.29px;top:474px;font-size:8.6px;line-height:10px;color:#1a1a1a;font-weight:700;transform:scaleX(0.9040);transform-origin:0 50%;">Celkem</span>
<span class="t" style="left:652.74px;top:474px;font-size:8.5px;line-height:10px;color:#1a1a1a;font-weight:700;transform:scaleX(1.0225);transform-origin:0 50%;">2114</span>
<span class="t" style="left:677.74px;top:474px;font-size:8.5px;line-height:10px;color:#1a1a1a;font-weight:700;transform:scaleX(1.0154);transform-origin:0 50%;">2077</span>
<span class="t" style="left:702.74px;top:474px;font-size:8.5px;line-height:10px;color:#1a1a1a;font-weight:700;transform:scaleX(1.0131);transform-origin:0 50%;">2349</span>
<span class="t" style="left:727.74px;top:474px;font-size:8.5px;line-height:10px;color:#1a1a1a;font-weight:700;transform:scaleX(1.0131);transform-origin:0 50%;">2523</span>
<span class="t" style="left:752.74px;top:474px;font-size:8.5px;line-height:10px;color:#1a1a1a;font-weight:700;transform:scaleX(1.0084);transform-origin:0 50%;">2635</span>
<svg class="b" style="left:647px;top:313px;" width="4" height="173"><rect x="1.3" y="1.7" width="0.8" height="169.8" fill="#5a5a5a"/></svg>
<svg class="b" style="left:0px;top:0px;" width="1024" height="526" viewBox="0 0 1024 526"><path d="M86 372.5H548" stroke="#d9d9d9" stroke-width="0.700" stroke-dasharray="0.700 1.800"/><path d="M86 397.3H548" stroke="#d9d9d9" stroke-width="0.700" stroke-dasharray="0.700 1.800"/><path d="M86 421.9H548" stroke="#d9d9d9" stroke-width="0.700" stroke-dasharray="0.700 1.800"/><path d="M86 446.5H548" stroke="#d9d9d9" stroke-width="0.700" stroke-dasharray="0.700 1.800"/><rect x="99" y="349.7" width="18.2" height="96.6" fill="#25277a"/><rect x="131.05" y="385.3" width="18.2" height="61" fill="#25277a"/><rect x="163.1" y="393.5" width="18.2" height="52.8" fill="#25277a"/><rect x="195.15" y="399.7" width="18.2" height="46.6" fill="#25277a"/><rect x="227.2" y="404" width="18.2" height="42.3" fill="#25277a"/><rect x="259.25" y="410.2" width="18.2" height="36.1" fill="#25277a"/><rect x="291.3" y="411.6" width="18.2" height="34.7" fill="#25277a"/><rect x="323.35" y="421" width="18.2" height="25.3" fill="#25277a"/><rect x="355.4" y="421.5" width="18.2" height="24.8" fill="#25277a"/><rect x="387.45" y="422" width="18.2" height="24.3" fill="#25277a"/><rect x="419.5" y="424.1" width="18.2" height="22.2" fill="#25277a"/><rect x="451.55" y="427.9" width="18.2" height="18.4" fill="#25277a"/><rect x="483.6" y="430.4" width="18.2" height="15.9" fill="#25277a"/><rect x="515.65" y="430.4" width="18.2" height="15.9" fill="#25277a"/><path d="M108.1 374.7L140.15 408.3L172.2 410.1L204.25 414.3L236.3 421.6L268.35 424.1L300.4 423L332.45 435.5L364.5 436L396.55 431.8L428.6 435.2L460.65 437.6L492.7 441.7L524.75 443.6" fill="none" stroke="#f2979c" stroke-width="1.500" stroke-linejoin="round"/><path d="M108.1 372.7l2 2l-2 2l-2 -2z" fill="#f2979c"/><path d="M140.15 406.3l2 2l-2 2l-2 -2z" fill="#f2979c"/><path d="M172.2 408.1l2 2l-2 2l-2 -2z" fill="#f2979c"/><path d="M204.25 412.3l2 2l-2 2l-2 -2z" fill="#f2979c"/><path d="M236.3 419.6l2 2l-2 2l-2 -2z" fill="#f2979c"/><path d="M268.35 422.1l2 2l-2 2l-2 -2z" fill="#f2979c"/><path d="M300.4 421l2 2l-2 2l-2 -2z" fill="#f2979c"/><path d="M332.45 433.5l2 2l-2 2l-2 -2z" fill="#f2979c"/><path d="M364.5 434l2 2l-2 2l-2 -2z" fill="#f2979c"/><path d="M396.55 429.8l2 2l-2 2l-2 -2z" fill="#f2979c"/><path d="M428.6 433.2l2 2l-2 2l-2 -2z" fill="#f2979c"/><path d="M460.65 435.6l2 2l-2 2l-2 -2z" fill="#f2979c"/><path d="M492.7 439.7l2 2l-2 2l-2 -2z" fill="#f2979c"/><path d="M524.75 441.6l2 2l-2 2l-2 -2z" fill="#f2979c"/><circle cx="63.200" cy="336.500" r="3.200" fill="#25277a"/><path d="M144.700 333.300l3.100 3.200l-3.100 3.200l-3.100 -3.200z" fill="#f2979c"/></svg>
<span class="t" style="left:67.65px;top:332px;font-size:8.2px;line-height:9px;color:#5a5a5a;transform:scaleX(0.9275);transform-origin:0 50%;">Trestné činy na 100k</span>
<span class="t" style="left:148.55px;top:332px;font-size:8.2px;line-height:9px;color:#5a5a5a;transform:scaleX(0.9519);transform-origin:0 50%;">Objasněno na 100k</span>
<span class="t" style="left:70.73px;top:369px;font-size:7.4px;line-height:9px;color:#777;transform:scaleX(1.0276);transform-origin:0 50%;">0,6</span>
<span class="t" style="left:70.74px;top:393px;font-size:7.4px;line-height:9px;color:#777;transform:scaleX(1.0161);transform-origin:0 50%;">0,4</span>
<span class="t" style="left:70.73px;top:418px;font-size:7.4px;line-height:9px;color:#777;transform:scaleX(1.0316);transform-origin:0 50%;">0,2</span>
<span class="t" style="left:70.73px;top:442px;font-size:7.4px;line-height:9px;color:#777;transform:scaleX(1.0238);transform-origin:0 50%;">0,0</span>
<span class="t" style="left:24.7px;top:449.05px;font-size:7.9px;line-height:7.9px;color:#707070;width:80px;text-align:right;transform-origin:100% 50%;transform:rotate(-32.5deg) scaleX(0.855);">Hlavní město P...</span>
<span class="t" style="left:56.75px;top:449.05px;font-size:7.9px;line-height:7.9px;color:#707070;width:80px;text-align:right;transform-origin:100% 50%;transform:rotate(-32.5deg) scaleX(0.855);">Středočeský kraj</span>
<span class="t" style="left:88.8px;top:449.05px;font-size:7.9px;line-height:7.9px;color:#707070;width:80px;text-align:right;transform-origin:100% 50%;transform:rotate(-32.5deg) scaleX(0.855);">Moravskoslezský...</span>
<span class="t" style="left:120.85px;top:449.05px;font-size:7.9px;line-height:7.9px;color:#707070;width:80px;text-align:right;transform-origin:100% 50%;transform:rotate(-32.5deg) scaleX(0.855);">Ústecký kraj</span>
<span class="t" style="left:152.9px;top:449.05px;font-size:7.9px;line-height:7.9px;color:#707070;width:80px;text-align:right;transform-origin:100% 50%;transform:rotate(-32.5deg) scaleX(0.855);">Jihomoravský kraj</span>
<span class="t" style="left:184.95px;top:449.05px;font-size:7.9px;line-height:7.9px;color:#707070;width:80px;text-align:right;transform-origin:100% 50%;transform:rotate(-32.5deg) scaleX(0.855);">Olomoucký kraj</span>
<span class="t" style="left:217px;top:449.05px;font-size:7.9px;line-height:7.9px;color:#707070;width:80px;text-align:right;transform-origin:100% 50%;transform:rotate(-32.5deg) scaleX(0.855);">Jihočeský kraj</span>
<span class="t" style="left:249.05px;top:449.05px;font-size:7.9px;line-height:7.9px;color:#707070;width:80px;text-align:right;transform-origin:100% 50%;transform:rotate(-32.5deg) scaleX(0.855);">Plzeňský kraj</span>
<span class="t" style="left:281.1px;top:449.05px;font-size:7.9px;line-height:7.9px;color:#707070;width:80px;text-align:right;transform-origin:100% 50%;transform:rotate(-32.5deg) scaleX(0.855);">Liberecký kraj</span>
<span class="t" style="left:313.15px;top:449.05px;font-size:7.9px;line-height:7.9px;color:#707070;width:80px;text-align:right;transform-origin:100% 50%;transform:rotate(-32.5deg) scaleX(0.855);">Kraj Vysočina</span>
<span class="t" style="left:345.2px;top:449.05px;font-size:7.9px;line-height:7.9px;color:#707070;width:80px;text-align:right;transform-origin:100% 50%;transform:rotate(-32.5deg) scaleX(0.855);">Královéhradecký ...</span>
<span class="t" style="left:377.25px;top:449.05px;font-size:7.9px;line-height:7.9px;color:#707070;width:80px;text-align:right;transform-origin:100% 50%;transform:rotate(-32.5deg) scaleX(0.855);">Pardubický kraj</span>
<span class="t" style="left:409.3px;top:449.05px;font-size:7.9px;line-height:7.9px;color:#707070;width:80px;text-align:right;transform-origin:100% 50%;transform:rotate(-32.5deg) scaleX(0.855);">Zlínský kraj</span>
<span class="t" style="left:441.35px;top:449.05px;font-size:7.9px;line-height:7.9px;color:#707070;width:80px;text-align:right;transform-origin:100% 50%;transform:rotate(-32.5deg) scaleX(0.855);">Karlovarský kraj</span>
<svg class="b" style="left:811px;top:71px;" width="22" height="436"><rect x="1.8" y="1.6" width="18.4" height="433" fill="#ffffff"/></svg>
<svg class="b" style="left:812px;top:71px;" width="3" height="436"><rect x="1.1" y="1.6" width="0.7" height="433" fill="#c8c8c8"/></svg>
<svg class="b" style="left:818px;top:79px;" width="9" height="8" viewBox="0 0 9 8"><path d="M6.400 1.800H4.800L2.200 4.100L4.800 6.400H6.400L4 4.100z" fill="#3c3c3c"/></svg>
<svg class="b" style="left:819px;top:95px;" width="8" height="8" viewBox="0 0 8 8"><path d="M1.200 2.200H6.800L4.600 4.600V6.200L3.400 5.600V4.600z" fill="none" stroke="#6a6a6a" stroke-width="0.700" stroke-linejoin="round"/></svg>
<span class="t" style="left:817.4px;top:106.6px;width:10px;height:20px;font-size:7.9px;line-height:10px;color:#333;font-weight:700;writing-mode:vertical-rl;">Filtry</span>
<svg class="b" style="left:830px;top:71px;" width="99" height="455"><rect x="1.2" y="1.6" width="96.2" height="451.6" fill="#151515"/></svg>
<span class="t" style="left:835.36px;top:79px;font-size:8.9px;line-height:10px;color:#fff;font-weight:700;transform:scaleX(0.9044);transform-origin:0 50%;">Vizualizace</span>
<svg class="b" style="left:916px;top:80px;" width="8" height="7" viewBox="0 0 8 7"><path d="M1.400 0.900H3.200L6.200 3.300L3.200 5.700H1.400L4 3.300z" fill="#f4f4f4"/></svg>
<span class="t" style="left:835.24px;top:95px;font-size:6.8px;line-height:7px;color:#fff;font-weight:700;transform:scaleX(0.9184);transform-origin:0 50%;">Zkompilovat vizuál</span>
<svg class="b" style="left:834px;top:103px;" width="20" height="19"><rect x="1.7" y="1.1" width="16.6" height="16.3" fill="#2b2b2b"/></svg>
<svg class="b" style="left:0px;top:0px;" width="1024" height="260" viewBox="0 0 1024 260"><path d="M837.9 106.1H848" stroke="#6e6e6e" stroke-width="0.8"/><rect x="837.9" y="108.4" width="12.5" height="4.1" fill="#2bb49a"/><rect x="837.9" y="114.1" width="12.5" height="4.300" fill="#2bb49a"/><path d="M878.2 106H873.8a0.900 0.900 0 0 0 -0.900 0.900V117.800a0.900 0.900 0 0 0 0.900 0.900H876" fill="none" stroke="#d0d0d0" stroke-width="0.800"/><path d="M878.2 105.700L882.900 110.300H878.200z" fill="#e4e4e4"/><path d="M885.800 110.400L880 116.200" stroke="#c4c4c4" stroke-width="1.400"/><path d="M879.600 115.200L881.200 116.900L876.300 118.700z" fill="#d8d8d8"/><path d="M831.2 127.600H840.800L843.900 124.400L847 127.600H927" fill="none" stroke="#4a4a4a" stroke-width="0.700"/><path d="M831.2 252.800H927" stroke="#454545" stroke-width="1"/></svg>
<svg class="b" style="left:836.9px;top:133.2px;" width="10" height="10" viewBox="0 0 10 10"><path d="M0.4 0.5V9.5H9.8" fill="none" stroke="#858585" stroke-width="0.7"/><rect x="1" y="1.3" width="5.5" height="2.2" fill="#2180d6"/><rect x="1" y="4.3" width="7.500" height="2.2" fill="#858585"/><rect x="1" y="7" width="4" height="1.800" fill="#858585"/></svg>
<svg class="b" style="left:851.9px;top:133.2px;" width="10" height="10" viewBox="0 0 10 10"><path d="M0.4 0.5V9.5H9.8" fill="none" stroke="#858585" stroke-width="0.7"/><rect x="1.5" y="2.5" width="2" height="6.5" fill="#858585"/><rect x="4.3" y="4.500" width="2" height="4.500" fill="#858585"/><rect x="7" y="1.500" width="2" height="7.500" fill="#858585"/><rect x="1.500" y="2.500" width="2" height="3" fill="#2180d6"/></svg>
<svg class="b" style="left:866.8px;top:133.2px;" width="10" height="10" viewBox="0 0 10 10"><path d="M0.4 0.5V9.5H9.8" fill="none" stroke="#858585" stroke-width="0.7"/><rect x="1" y="0.8" width="8.500" height="2" fill="#2180d6"/><rect x="1" y="3.300" width="5" height="2" fill="#858585"/><rect x="1" y="6" width="6.500" height="2.500" fill="#858585"/></svg>
<svg class="b" style="left:881.9px;top:133.2px;" width="10" height="10" viewBox="0 0 10 10"><path d="M0.4 0.5V9.5H9.8" fill="none" stroke="#858585" stroke-width="0.7"/><rect x="1" y="0.5" width="2.200" height="8.500" fill="#2180d6"/><rect x="4" y="4" width="2" height="5" fill="#858585"/><rect x="6.800" y="2.500" width="2.200" height="6.500" fill="#858585"/></svg>
<svg class="b" style="left:896.8px;top:133.2px;" width="10" height="10" viewBox="0 0 10 10"><path d="M0.4 0.5V9.5H9.8" fill="none" stroke="#858585" stroke-width="0.7"/><rect x="1" y="1.3" width="8" height="2.2" fill="#2180d6"/><rect x="1" y="4.300" width="8" height="2.200" fill="#858585"/><rect x="1" y="7" width="8" height="1.800" fill="#858585"/></svg>
<svg class="b" style="left:911.7px;top:133.2px;" width="10" height="10" viewBox="0 0 10 10"><path d="M0.4 0.5V9.5H9.8" fill="none" stroke="#858585" stroke-width="0.7"/><rect x="1.5" y="1" width="2" height="8" fill="#858585"/><rect x="4.3" y="1" width="2" height="8" fill="#858585"/><rect x="7" y="1" width="2" height="8" fill="#858585"/><rect x="4.300" y="1" width="2" height="5" fill="#2180d6"/></svg>
<svg class="b" style="left:836.9px;top:148.2px;" width="10" height="10" viewBox="0 0 10 10"><path d="M0.4 0.5V9.5H9.8" fill="none" stroke="#858585" stroke-width="0.7"/><path d="M0.8 6.5L3.5 3L5.500 5L9.500 1.500" fill="none" stroke="#858585" stroke-width="0.7"/><path d="M0.800 7.500L4 4.500L6.500 6L9.500 3" fill="none" stroke="#2180d6" stroke-width="0.7"/></svg>
<svg class="b" style="left:851.9px;top:148.2px;" width="10" height="10" viewBox="0 0 10 10"><path d="M0.5 9.500L4 1L6.500 5L8.500 2L9.800 9.500z" fill="none" stroke="#858585" stroke-width="0.7"/><path d="M0.500 9.500L4.500 4.500L9.800 9.500z" fill="#2180d6"/></svg>
<svg class="b" style="left:866.8px;top:148.2px;" width="10" height="10" viewBox="0 0 10 10"><path d="M0.4 0.5V9.5H9.8" fill="none" stroke="#858585" stroke-width="0.7"/><path d="M0.8 2L3.500 5.500L6.500 2L9.500 5V8L6.500 5.500L3.500 8.500L0.800 5.500z" fill="#2180d6"/></svg>
<svg class="b" style="left:881.9px;top:148.2px;" width="10" height="10" viewBox="0 0 10 10"><path d="M0.4 0.5V9.5H9.8" fill="none" stroke="#858585" stroke-width="0.7"/><path d="M0.8 1H9.800V6.500L7 4L4 7L0.800 4.500z" fill="#2180d6"/></svg>
<svg class="b" style="left:896.8px;top:148.2px;" width="10" height="10" viewBox="0 0 10 10"><path d="M0.4 0.5V9.5H9.8" fill="none" stroke="#858585" stroke-width="0.7"/><rect x="1.5" y="4" width="2" height="5" fill="#858585"/><rect x="4.300" y="5.500" width="2" height="3.500" fill="#858585"/><rect x="7" y="2.500" width="2" height="6.500" fill="#858585"/><rect x="1.5" y="1" width="2" height="5" fill="#2180d6"/><path d="M1 7L4 5L6 6.500L9.500 3.500" fill="none" stroke="#b4b4b4" stroke-width="0.7"/></svg>
<svg class="b" style="left:911.7px;top:148.2px;" width="10" height="10" viewBox="0 0 10 10"><path d="M0.4 0.5V9.5H9.8" fill="none" stroke="#858585" stroke-width="0.7"/><rect x="1.5" y="4" width="2" height="5" fill="#2180d6"/><rect x="4.300" y="1.500" width="2" height="7.500" fill="#858585"/><rect x="7" y="3.500" width="2" height="5.500" fill="#858585"/><path d="M1 7L4 4L6 6.500L9.500 3.500" fill="none" stroke="#b4b4b4" stroke-width="0.7"/></svg>
<svg class="b" style="left:836.9px;top:163.1px;" width="10" height="10" viewBox="0 0 10 10"><path d="M0.4 0.5V9.5H9.8" fill="none" stroke="#858585" stroke-width="0.7"/><path d="M0.8 2L3.500 5L6.500 3L9.500 1V9H0.800z" fill="#858585"/><path d="M0.800 5L4 8L6.500 4L9.500 6V9H0.800z" fill="#d9822b"/><path d="M0.800 6.500L3.500 4.500L6.500 7L9.500 5V7L6.500 9L3.500 6.500L0.800 8z" fill="#2180d6"/></svg>
<svg class="b" style="left:851.9px;top:163.1px;" width="10" height="10" viewBox="0 0 10 10"><path d="M0.4 0.5V9.5H9.8" fill="none" stroke="#858585" stroke-width="0.7"/><rect x="1.2" y="1" width="2" height="8" fill="#858585"/><rect x="4" y="4" width="2" height="5" fill="#858585"/><rect x="6.800" y="1" width="2.400" height="8" fill="#858585"/><rect x="4" y="1.500" width="2.800" height="3" fill="#2180d6"/></svg>
<svg class="b" style="left:866.8px;top:163.1px;" width="10" height="10" viewBox="0 0 10 10"><path d="M0.5 1H9.500L8.500 3.500H1.500zM2 4.300H8L7 6.500H3zM3.500 7.300H6.500V9.500H3.500z" fill="#2180d6"/></svg>
<svg class="b" style="left:881.9px;top:163.1px;" width="10" height="10" viewBox="0 0 10 10"><path d="M0.4 0.5V9.5H9.8" fill="none" stroke="#858585" stroke-width="0.7"/><circle cx="2.5" cy="2" r="0.8" fill="#2180d6"/><circle cx="5" cy="4" r="1" fill="#2180d6"/><circle cx="8" cy="1.500" r="0.900" fill="#b4b4b4"/><circle cx="2.800" cy="7" r="0.900" fill="#b4b4b4"/><circle cx="7.500" cy="6.500" r="0.900" fill="#2180d6"/></svg>
<svg class="b" style="left:896.8px;top:163.1px;" width="10" height="10" viewBox="0 0 10 10"><circle cx="5" cy="5" r="4.4" fill="none" stroke="#858585" stroke-width="0.7"/><path d="M5 5V0.600A4.400 4.400 0 0 1 8.800 7.200z" fill="#2180d6"/></svg>
<svg class="b" style="left:911.7px;top:163.1px;" width="10" height="10" viewBox="0 0 10 10"><circle cx="5" cy="5" r="3.4" fill="none" stroke="#2180d6" stroke-width="2"/><path d="M2 3.300A3.400 3.400 0 0 1 5 1.600" fill="none" stroke="#858585" stroke-width="2"/></svg>
<svg class="b" style="left:836.9px;top:177.9px;" width="10" height="10" viewBox="0 0 10 10"><rect x="0.5" y="0.5" width="9" height="9" fill="none" stroke="#858585" stroke-width="0.7"/><rect x="0.5" y="0.500" width="4" height="9" fill="#2180d6"/><path d="M0.500 5H4.500M4.500 3.500H9.500M7 3.500V9.500M7 6.500H9.500" stroke="#141414" stroke-width="0.6"/><path d="M4.500 3.500H9.500M7 3.500V9.500M7 6.500H9.500" stroke="#858585" stroke-width="0.6"/></svg>
<svg class="b" style="left:851.9px;top:177.9px;" width="10" height="10" viewBox="0 0 10 10"><circle cx="5" cy="4.2" r="3.600" fill="none" stroke="#858585" stroke-width="0.8"/><path d="M3.500 2.500L5.500 2L6.500 4L5 6L3.800 5z" fill="#3fae5f"/><path d="M2 9.500H8M5 8V9.500" stroke="#858585" stroke-width="0.8"/></svg>
<svg class="b" style="left:866.8px;top:177.9px;" width="10" height="10" viewBox="0 0 10 10"><path d="M0.5 1L3 2L5 1L7 2L9.500 1V6L7 9L5 8L3 9L0.500 6z" fill="#858585"/><path d="M0.5 1L3 2L5 1V5L3 4.500L0.500 5z" fill="#2180d6"/><path d="M5 5L9.500 4V6L7 9L5 8z" fill="#2180d6"/></svg>
<svg class="b" style="left:881.9px;top:177.9px;" width="10" height="10" viewBox="0 0 10 10"><path d="M0.5 1L3 2L5 1L7 2L9.500 1V6L7 9L5 8L3 9L0.500 6z" fill="none" stroke="#2b6fa8" stroke-width="0.7"/><path d="M1.500 3L4 5L5 3L8 5.500M3 7L5 5.500L7 7.500" fill="none" stroke="#2b6fa8" stroke-width="0.7"/></svg>
<svg class="b" style="left:896.8px;top:177.9px;" width="10" height="10" viewBox="0 0 10 10"><path d="M5.500 0.500L9.500 9.500L5.500 7L1.500 9.500z" fill="#3aa0e8"/><path d="M5.500 0.500L9.500 9.500L5.500 7z" fill="#1b6bb0"/></svg>
<svg class="b" style="left:911.7px;top:177.9px;" width="10" height="10" viewBox="0 0 10 10"><path d="M1 7.500A4.200 4.200 0 0 1 9.400 7.500" fill="none" stroke="#2180d6" stroke-width="1.600"/><path d="M1 7.500A4.200 4.200 0 0 1 4 3.600" fill="none" stroke="#b4b4b4" stroke-width="1.600"/></svg>
<svg class="b" style="left:836.9px;top:192.9px;" width="10" height="10" viewBox="0 0 10 10"><rect x="0.5" y="2" width="9" height="6.500" fill="none" stroke="#858585" stroke-width="0.7"/><rect x="2" y="3.500" width="6" height="3.500" fill="#1d5a8c"/></svg>
<svg class="b" style="left:851.9px;top:192.9px;" width="10" height="10" viewBox="0 0 10 10"><rect x="0.5" y="0.8" width="9" height="8.800" fill="none" stroke="#858585" stroke-width="0.7"/><path d="M2 3H7.500M2 5H6.500M2 7H7.500" stroke="#2b6fa8" stroke-width="0.9"/></svg>
<svg class="b" style="left:866.8px;top:192.9px;" width="10" height="10" viewBox="0 0 10 10"><rect x="0.5" y="1.500" width="9" height="7.500" fill="none" stroke="#858585" stroke-width="0.7"/><path d="M2 6L3.500 3.500L5 6z" fill="#3fae5f"/><path d="M5.500 3.500H8.500L7 6z" fill="#d13438"/></svg>
<svg class="b" style="left:881.9px;top:192.9px;" width="10" height="10" viewBox="0 0 10 10"><rect x="0.5" y="1" width="9" height="8" fill="none" stroke="#858585" stroke-width="0.7"/><path d="M0.500 3H9.500M2 5H4M2 7H4" stroke="#858585" stroke-width="0.7"/><path d="M5 5H9.800L8 7.200V9.800H6.800V7.200z" fill="#141414" stroke="#b4b4b4" stroke-width="0.7"/></svg>
<svg class="b" style="left:896.8px;top:192.9px;" width="10" height="10" viewBox="0 0 10 10"><rect x="0.5" y="1" width="9" height="8.500" fill="none" stroke="#858585" stroke-width="0.7"/><path d="M0.500 3.200H9.500M0.500 5.300H9.500M0.500 7.400H9.500M3.500 1V9.500M6.500 1V9.500" stroke="#858585" stroke-width="0.600"/></svg>
<svg class="b" style="left:911.7px;top:192.9px;" width="10" height="10" viewBox="0 0 10 10"><rect x="0.5" y="1" width="9" height="8.500" fill="none" stroke="#858585" stroke-width="0.7"/><rect x="0.500" y="6.500" width="9" height="3" fill="#2180d6"/><rect x="6.500" y="3" width="3" height="6.500" fill="#2180d6"/><path d="M0.500 3.200H9.500M0.500 5.300H9.500M0.500 7.400H9.500M3.500 1V9.500M6.500 1V9.500" stroke="#141414" stroke-width="0.500"/></svg>
<span class="t" style="left:838.43px;top:208px;font-size:9.6px;line-height:11px;color:#2b88d8;-webkit-text-stroke:0.3px #2b88d8;">R</span>
<span class="t" style="left:850.88px;top:208px;font-size:8.6px;line-height:10px;color:#2b88d8;transform:scaleX(1.1253);transform-origin:0 50%;">Py</span>
<svg class="b" style="left:866.8px;top:208px;" width="10" height="10" viewBox="0 0 10 10"><path d="M0.4 0.5V9.5H9.8" fill="none" stroke="#858585" stroke-width="0.7"/><path d="M1.500 2H8M1.500 5H5M1.500 7.500H3.500" stroke="#858585" stroke-width="0.800"/><circle cx="8.300" cy="2" r="1.100" fill="#2180d6"/><circle cx="5.200" cy="5" r="0.800" fill="#858585"/></svg>
<svg class="b" style="left:881.9px;top:208px;" width="10" height="10" viewBox="0 0 10 10"><rect x="0.3" y="4" width="3" height="2.200" fill="#2180d6"/><rect x="6" y="0.800" width="3.500" height="2.200" rx="1" fill="#2180d6"/><rect x="6" y="4" width="3.500" height="2.200" rx="1" fill="#2180d6"/><rect x="6" y="7.200" width="3.500" height="2.200" rx="1" fill="#2180d6"/><path d="M3.300 5H6M4.800 2V8.300M4.800 2H6M4.800 8.300H6" fill="none" stroke="#2180d6" stroke-width="0.600"/></svg>
<svg class="b" style="left:896.8px;top:208px;" width="10" height="10" viewBox="0 0 10 10"><path d="M0.800 1H9.500V6.500H4L2 8.800V6.500H0.800z" fill="none" stroke="#2b6fa8" stroke-width="0.800"/></svg>
<svg class="b" style="left:911.7px;top:208px;" width="10" height="10" viewBox="0 0 10 10"><path d="M1.500 0.500H6.500L9 3V9.500H1.500z" fill="none" stroke="#858585" stroke-width="0.700"/><path d="M3 6.500H7.500M4 5H7.500" stroke="#2b6fa8" stroke-width="0.800"/><circle cx="1.800" cy="4" r="1.100" fill="#2180d6"/></svg>
<svg class="b" style="left:836.9px;top:223px;" width="10" height="10" viewBox="0 0 10 10"><path d="M2.500 1H7.500V4A2.500 2.500 0 0 1 2.500 4z" fill="none" stroke="#b4b4b4" stroke-width="0.800"/><path d="M2.500 2H1V3.500L2.500 4.500M7.500 2H9V3.500L7.500 4.500M5 6.500V8" fill="none" stroke="#b4b4b4" stroke-width="0.700"/><rect x="2.500" y="0.800" width="5" height="1.200" fill="#2180d6"/><rect x="2.800" y="8" width="4.400" height="1.400" fill="#2180d6"/></svg>
<svg class="b" style="left:851.9px;top:223px;" width="10" height="10" viewBox="0 0 10 10"><path d="M1.200 0.500H6L9 3.500V9.800H1.200z" fill="none" stroke="#b4b4b4" stroke-width="0.800"/><path d="M3 9V6.500M5 9V4.500M7 9V6" stroke="#b4b4b4" stroke-width="1"/></svg>
<svg class="b" style="left:866.8px;top:223px;" width="10" height="10" viewBox="0 0 10 10"><rect x="1" y="2.500" width="8.800" height="6.500" fill="none" stroke="#858585" stroke-width="0.700"/><rect x="3" y="4" width="5.500" height="3.500" fill="#1d5a8c"/><path d="M2 0H4.200L3.200 2.800H4.800L1 8L2 4.200H0.300z" fill="#f0a52e"/></svg>
<svg class="b" style="left:881.9px;top:223px;" width="10" height="10" viewBox="0 0 10 10"><rect x="4" y="1" width="4" height="4" fill="none" stroke="#858585" stroke-width="0.700"/><path d="M3 5.500H9.800L7.500 7.500V9.800H5.500V7.500z" fill="#141414" stroke="#b4b4b4" stroke-width="0.700"/><path d="M2 0H4.200L3.200 2.800H4.800L1 8L2 4.200H0.300z" fill="#f0a52e"/></svg>
<svg class="b" style="left:896.8px;top:223px;" width="10" height="10" viewBox="0 0 10 10"><path d="M2.500 1.500H9V5H5V9H1.500" fill="none" stroke="#2180d6" stroke-width="1.400"/><circle cx="1.800" cy="2" r="1.600" fill="#e8821e"/><circle cx="8.800" cy="8.500" r="1.200" fill="#e8821e"/></svg>
<svg class="b" style="left:911.7px;top:223px;" width="10" height="10" viewBox="0 0 10 10"><path d="M5 0.500L9.500 5L5 9.500L0.500 5z" fill="none" stroke="#7a2a8a" stroke-width="0.900"/><path d="M2.800 2.800L7.200 7.200M7.200 2.800L2.800 7.200" stroke="#7a2a8a" stroke-width="0.800"/></svg>
<svg class="b" style="left:836.9px;top:237.5px;" width="10" height="10" viewBox="0 0 10 10"><path d="M0.500 1H5.500L9.500 5L5.500 9H0.500L4.500 5z" fill="none" stroke="#1b6bb0" stroke-width="0.900"/><path d="M3 9L7 5" stroke="#1b6bb0" stroke-width="0.9"/></svg>
<svg class="b" style="left:851.9px;top:237.5px;" width="10" height="10" viewBox="0 0 10 10"><circle cx="2.300" cy="5" r="0.600" fill="#ccc"/><circle cx="4.300" cy="5" r="0.600" fill="#ccc"/><circle cx="6.300" cy="5" r="0.600" fill="#ccc"/></svg>
<span class="t" style="left:837.46px;top:259px;font-size:6.5px;line-height:7px;color:#ececec;transform:scaleX(1.0341);transform-origin:0 50%;">Hodnoty</span>
<svg class="b" style="left:832px;top:268px;" width="94" height="17"><rect x="2.05" y="1.75" width="89.9" height="13.7" fill="none" stroke="#5a5a5a" stroke-width="0.7" stroke-dasharray="0.7 0.7"/></svg>
<span class="t" style="left:838.71px;top:274px;font-size:6.5px;line-height:7px;color:#ececec;">Sem přidejte datová pole</span>
<span class="t" style="left:837.48px;top:291px;font-size:6.7px;line-height:7px;color:#fff;transform:scaleX(0.9645);transform-origin:0 50%;-webkit-text-stroke:0.3px #fff;">Podrobná analýza</span>
<span class="t" style="left:837.52px;top:305px;font-size:6.5px;line-height:7px;color:#ececec;transform:scaleX(0.9178);transform-origin:0 50%;">Křížová sestava</span>
<svg class="b" style="left:897px;top:302px;" width="20" height="11"><rect x="1.55" y="1.45" width="17.1" height="8.1" rx="4.05" fill="none" stroke="#b0b0b0" stroke-width="0.7"/></svg>
<svg class="b" style="left:900px;top:304px;" width="7" height="7"><rect x="1.4" y="1.6" width="3.8" height="3.8" rx="1.9" fill="#b8b8b8"/></svg>
<span class="t" style="left:837.81px;top:319px;font-size:6.5px;line-height:7px;color:#ececec;transform:scaleX(0.9579);transform-origin:0 50%;">Zachovat všechny</span>
<span class="t" style="left:837.93px;top:328px;font-size:6.5px;line-height:7px;color:#ececec;transform:scaleX(1.0285);transform-origin:0 50%;">filtry</span>
<svg class="b" style="left:897px;top:315px;" width="20" height="12"><rect x="1.2" y="1.9" width="17.8" height="8.9" rx="4.45" fill="#2db59a"/></svg>
<svg class="b" style="left:908px;top:318px;" width="6" height="7"><rect x="1" y="1.4" width="3.9" height="3.9" rx="1.95" fill="#1a1a1a"/></svg>
<svg class="b" style="left:901px;top:318px;" width="7" height="7" viewBox="0 0 7 7"><path d="M1.400 3.600L2.800 5L5.400 2" fill="none" stroke="#1a3a33" stroke-width="0.700"/></svg>
<svg class="b" style="left:832px;top:338px;" width="94" height="17"><rect x="2.05" y="1.95" width="89.9" height="13.5" fill="#000" stroke="#555" stroke-width="0.7" stroke-dasharray="0.7 0.7"/></svg>
<span class="t" style="left:837.71px;top:344px;font-size:6.5px;line-height:7px;color:#ececec;transform:scaleX(1.0025);transform-origin:0 50%;">Sem přidejte pole podrobn...</span>
<svg class="b" style="left:926px;top:71px;" width="99" height="455"><rect x="1.4" y="1.6" width="96.6" height="451.6" fill="#151515"/></svg>
<svg class="b" style="left:926px;top:71px;" width="3" height="455"><rect x="1.2" y="1.6" width="0.8" height="451.6" fill="#3c3c3c"/></svg>
<span class="t" style="left:931.95px;top:79px;font-size:8.9px;line-height:10px;color:#fff;font-weight:700;transform:scaleX(0.9479);transform-origin:0 50%;">Data</span>
<svg class="b" style="left:1012.6px;top:80px;" width="8" height="7" viewBox="0 0 8 7"><path d="M1.400 0.900H3.200L6.200 3.300L3.200 5.700H1.400L4 3.300z" fill="#f4f4f4"/></svg>
<svg class="b" style="left:929px;top:96px;" width="94" height="15"><rect x="1.65" y="1.55" width="90.6" height="11.9" rx="1.15" fill="#1e1e1e" stroke="#6a6a6a" stroke-width="0.7"/></svg>
<svg class="b" style="left:936px;top:99.5px;" width="9" height="9" viewBox="0 0 9 9"><circle cx="3.600" cy="3.600" r="2.400" fill="none" stroke="#aaa" stroke-width="0.700"/><path d="M5.400 5.400L7.600 7.600" stroke="#aaa" stroke-width="0.700"/></svg>
<span class="t" style="left:947.89px;top:99px;font-size:7.3px;line-height:9px;color:#8f8f8f;transform:scaleX(1.0384);transform-origin:0 50%;">Hledat</span>
<span class="t" style="left:952.89px;top:119px;font-size:7px;line-height:7px;color:#f2f2f2;transform:scaleX(0.8850);transform-origin:0 50%;">CalendarTable</span>
<span class="t" style="left:952.88px;top:132px;font-size:7px;line-height:7px;color:#f2f2f2;transform:scaleX(0.9016);transform-origin:0 50%;">CountriesEurope</span>
<span class="t" style="left:952.7px;top:145px;font-size:7px;line-height:7px;color:#f2f2f2;transform:scaleX(0.9009);transform-origin:0 50%;">Evropa celkem</span>
<span class="t" style="left:952.7px;top:157px;font-size:7px;line-height:7px;color:#f2f2f2;transform:scaleX(0.8988);transform-origin:0 50%;">Evropa na 100k</span>
<span class="t" style="left:952.71px;top:170px;font-size:7px;line-height:7px;color:#f2f2f2;transform:scaleX(0.8786);transform-origin:0 50%;">Kraje ČR</span>
<span class="t" style="left:952.69px;top:183px;font-size:7px;line-height:7px;color:#f2f2f2;transform:scaleX(0.9044);transform-origin:0 50%;">Kriminalita v ČR</span>
<span class="t" style="left:952.69px;top:196px;font-size:7px;line-height:7px;color:#f2f2f2;transform:scaleX(0.9164);transform-origin:0 50%;">Kriminalita_pomocná</span>
<span class="t" style="left:952.68px;top:209px;font-size:7px;line-height:7px;color:#f2f2f2;transform:scaleX(0.9245);transform-origin:0 50%;">Počet obyvatel podle ...</span>
<span class="t" style="left:952.69px;top:222px;font-size:7px;line-height:7px;color:#f2f2f2;transform:scaleX(0.9083);transform-origin:0 50%;">Překladová tabulka</span>
<span class="t" style="left:953.05px;top:234px;font-size:7px;line-height:7px;color:#f2f2f2;transform:scaleX(0.8818);transform-origin:0 50%;">sakila drug_crime_by_...</span>
<span class="t" style="left:953.04px;top:247px;font-size:7px;line-height:7px;color:#f2f2f2;transform:scaleX(0.9016);transform-origin:0 50%;">sakila drug_offences</span>
<span class="t" style="left:953.05px;top:260px;font-size:7px;line-height:7px;color:#f2f2f2;transform:scaleX(0.8835);transform-origin:0 50%;">sakila drug_seizures</span>
<span class="t" style="left:953.05px;top:273px;font-size:7px;line-height:7px;color:#f2f2f2;transform:scaleX(0.8793);transform-origin:0 50%;">sakila prevalence_of_d...</span>
<span class="t" style="left:952.91px;top:286px;font-size:7px;line-height:7px;color:#f2f2f2;transform:scaleX(0.9204);transform-origin:0 50%;">Státy</span>
<span class="t" style="left:953.08px;top:299px;font-size:7px;line-height:7px;color:#f2f2f2;transform:scaleX(0.8736);transform-origin:0 50%;">YearTable</span>
<svg class="b" style="left:0px;top:0px;" width="1024" height="320" viewBox="0 0 1024 320"><path d="M937.1 119.6l1.800 1.900l-1.800 1.900" fill="none" stroke="#d8d8d8" stroke-width="0.750"/><rect x="943.4" y="118.1" width="5.600" height="5.400" rx="0.800" fill="none" stroke="#d8d8d8" stroke-width="0.800"/><path d="M943.4 120.1h5.600M946 118.1v5.400" stroke="#d8d8d8" stroke-width="0.600"/><rect x="947" y="120.9" width="3.600" height="4.600" rx="0.800" fill="#d8d8d8" stroke="#141414" stroke-width="0.500"/><path d="M937.1 132.43l1.800 1.900l-1.800 1.900" fill="none" stroke="#d8d8d8" stroke-width="0.750"/><rect x="943.4" y="130.93" width="5.600" height="5.400" rx="0.800" fill="none" stroke="#d8d8d8" stroke-width="0.800"/><path d="M943.4 132.93h5.600M946 130.93v5.400" stroke="#d8d8d8" stroke-width="0.600"/><rect x="947" y="133.73" width="3.600" height="4.600" rx="0.800" fill="#d8d8d8" stroke="#141414" stroke-width="0.500"/><path d="M937.1 145.26l1.800 1.900l-1.800 1.900" fill="none" stroke="#d8d8d8" stroke-width="0.750"/><rect x="943.4" y="143.76" width="6.600" height="6.400" rx="1" fill="none" stroke="#d8d8d8" stroke-width="0.800"/><path d="M943.4 145.96h6.600M943.4 148.06h6.600M946.7 143.76v6.400" stroke="#d8d8d8" stroke-width="0.600"/><path d="M937.1 158.09l1.800 1.900l-1.800 1.900" fill="none" stroke="#d8d8d8" stroke-width="0.750"/><rect x="943.4" y="156.59" width="6.600" height="6.400" rx="1" fill="none" stroke="#d8d8d8" stroke-width="0.800"/><path d="M943.4 158.79h6.600M943.4 160.89h6.600M946.7 156.59v6.400" stroke="#d8d8d8" stroke-width="0.600"/><path d="M937.1 170.92l1.800 1.900l-1.800 1.900" fill="none" stroke="#d8d8d8" stroke-width="0.750"/><rect x="943.4" y="169.42" width="6.600" height="6.400" rx="1" fill="none" stroke="#d8d8d8" stroke-width="0.800"/><path d="M943.4 171.62h6.600M943.4 173.72h6.600M946.7 169.42v6.400" stroke="#d8d8d8" stroke-width="0.600"/><path d="M937.1 183.75l1.800 1.900l-1.800 1.900" fill="none" stroke="#d8d8d8" stroke-width="0.750"/><rect x="943.4" y="182.25" width="6.600" height="6.400" rx="1" fill="none" stroke="#d8d8d8" stroke-width="0.800"/><path d="M943.4 184.45h6.600M943.4 186.55h6.600M946.7 182.25v6.400" stroke="#d8d8d8" stroke-width="0.600"/><path d="M937.1 196.58l1.800 1.900l-1.800 1.900" fill="none" stroke="#d8d8d8" stroke-width="0.750"/><rect x="943.4" y="195.08" width="6.600" height="6.400" rx="1" fill="none" stroke="#d8d8d8" stroke-width="0.800"/><path d="M943.4 197.28h6.600M943.4 199.38h6.600M946.7 195.08v6.400" stroke="#d8d8d8" stroke-width="0.600"/><path d="M937.1 209.41l1.800 1.900l-1.800 1.900" fill="none" stroke="#d8d8d8" stroke-width="0.750"/><rect x="943.4" y="207.91" width="6.600" height="6.400" rx="1" fill="none" stroke="#d8d8d8" stroke-width="0.800"/><path d="M943.4 210.11h6.600M943.4 212.21h6.600M946.7 207.91v6.400" stroke="#d8d8d8" stroke-width="0.600"/><path d="M937.1 222.24l1.800 1.900l-1.800 1.900" fill="none" stroke="#d8d8d8" stroke-width="0.750"/><rect x="943.4" y="220.74" width="6.600" height="6.400" rx="1" fill="none" stroke="#d8d8d8" stroke-width="0.800"/><path d="M943.4 222.94h6.600M943.4 225.04h6.600M946.7 220.74v6.400" stroke="#d8d8d8" stroke-width="0.600"/><path d="M937.1 235.07l1.800 1.900l-1.800 1.900" fill="none" stroke="#d8d8d8" stroke-width="0.750"/><rect x="943.4" y="233.57" width="6.600" height="6.400" rx="1" fill="none" stroke="#d8d8d8" stroke-width="0.800"/><path d="M943.4 235.77h6.600M943.4 237.87h6.600M946.7 233.57v6.400" stroke="#d8d8d8" stroke-width="0.600"/><path d="M937.1 247.9l1.800 1.900l-1.800 1.900" fill="none" stroke="#d8d8d8" stroke-width="0.750"/><rect x="943.4" y="246.4" width="6.600" height="6.400" rx="1" fill="none" stroke="#d8d8d8" stroke-width="0.800"/><path d="M943.4 248.6h6.600M943.4 250.7h6.600M946.7 246.4v6.400" stroke="#d8d8d8" stroke-width="0.600"/><path d="M937.1 260.73l1.800 1.900l-1.800 1.900" fill="none" stroke="#d8d8d8" stroke-width="0.750"/><rect x="943.4" y="259.23" width="6.600" height="6.400" rx="1" fill="none" stroke="#d8d8d8" stroke-width="0.800"/><path d="M943.4 261.43h6.600M943.4 263.53h6.600M946.7 259.23v6.400" stroke="#d8d8d8" stroke-width="0.600"/><path d="M937.1 273.56l1.800 1.900l-1.800 1.900" fill="none" stroke="#d8d8d8" stroke-width="0.750"/><rect x="943.4" y="272.06" width="6.600" height="6.400" rx="1" fill="none" stroke="#d8d8d8" stroke-width="0.800"/><path d="M943.4 274.26h6.600M943.4 276.36h6.600M946.7 272.06v6.400" stroke="#d8d8d8" stroke-width="0.600"/><path d="M937.1 286.39l1.800 1.900l-1.800 1.900" fill="none" stroke="#d8d8d8" stroke-width="0.750"/><rect x="943.4" y="284.89" width="6.600" height="6.400" rx="1" fill="none" stroke="#d8d8d8" stroke-width="0.800"/><path d="M943.4 287.09h6.600M943.4 289.19h6.600M946.7 284.89v6.400" stroke="#d8d8d8" stroke-width="0.600"/><path d="M937.1 299.22l1.800 1.900l-1.800 1.900" fill="none" stroke="#d8d8d8" stroke-width="0.750"/><rect x="943.4" y="297.72" width="5.600" height="5.400" rx="0.800" fill="none" stroke="#d8d8d8" stroke-width="0.800"/><path d="M943.4 299.72h5.600M946 297.72v5.400" stroke="#d8d8d8" stroke-width="0.600"/><rect x="947" y="300.52" width="3.600" height="4.600" rx="0.800" fill="#d8d8d8" stroke="#141414" stroke-width="0.500"/></svg>
<svg class="b" style="left:-1px;top:71px;" width="23" height="457"><rect x="1" y="1.6" width="20.6" height="454" fill="#151515"/></svg>
<svg class="b" style="left:-1px;top:71px;" width="3" height="24"><rect x="1" y="1.9" width="0.9" height="21" fill="#1d826e"/></svg>
<svg class="b" style="left:0px;top:0px;" width="21" height="160" viewBox="0 0 21 160"><path d="M6.4 87V80.2h1.5v3h1.3v-1.6h1.4v1.6h1.3v-3h1.5V87z" fill="#c6c6c6"/><path d="M6.4 85.2h7" stroke="#111" stroke-width="0.5"/><rect x="6.4" y="101.4" width="8" height="7" fill="none" stroke="#c6c6c6" stroke-width="0.8"/><path d="M6.4 103.7h8M6.4 106h8M9.1 101.4v7M11.8 101.4v7" stroke="#c6c6c6" stroke-width="0.7"/><rect x="9" y="121.6" width="5.6" height="3.4" fill="none" stroke="#c6c6c6" stroke-width="0.7"/><rect x="6" y="124.6" width="4.6" height="3.2" fill="#111" stroke="#c6c6c6" stroke-width="0.7"/><rect x="9.6" y="127.2" width="5" height="3.2" fill="#111" stroke="#c6c6c6" stroke-width="0.7"/><path d="M6.6 150.6v-6.600h3.600l2 2v4.600" fill="none" stroke="#c6c6c6" stroke-width="0.8"/><path d="M5.8 151.400h8" stroke="#c6c6c6" stroke-width="1.4" stroke-dasharray="1.2 0.5"/></svg>
<svg class="b" style="left:19px;top:504px;" width="814" height="22"><rect x="1.6" y="1.6" width="811" height="18.6" fill="#292929"/></svg>
<svg class="b" style="left:-1px;top:523px;" width="1026" height="3"><rect x="1" y="1" width="1024" height="1" fill="#363636"/></svg>
<svg class="b" style="left:-1px;top:524px;" width="1026" height="3"><rect x="1" y="1" width="1024" height="1" fill="#1b1b1b"/></svg>
<svg class="b" style="left:829px;top:504px;" width="4" height="21"><rect x="1.4" y="1.6" width="1.2" height="18.4" fill="#3a3a3a"/></svg>
<svg class="b" style="left:87px;top:505px;" width="3" height="20"><rect x="1.3" y="1" width="0.7" height="18" fill="#3c3c3c"/></svg>
<svg class="b" style="left:0px;top:0px;" width="200" height="526" viewBox="0 0 200 526"><rect x="28.400" y="510.600" width="7.800" height="5.600" rx="0.800" fill="none" stroke="#e0e0e0" stroke-width="0.9"/><path d="M30.400 518h3.800" stroke="#e0e0e0" stroke-width="0.9"/><path d="M26.400 521.700h13" stroke="#1f9c85" stroke-width="1"/><rect x="54" y="509.600" width="4.600" height="8.600" rx="0.900" fill="none" stroke="#e0e0e0" stroke-width="0.9"/><path d="M55.600 516.900h1.400" stroke="#e0e0e0" stroke-width="0.6"/><path d="M73.600 513.200l-2.400 2.200l2.400 2.200z" fill="none" stroke="#8a8a8a" stroke-width="0.6"/><path d="M82.400 513.200l2.400 2.200l-2.400 2.200z" fill="none" stroke="#8a8a8a" stroke-width="0.6"/></svg>
<svg class="b" style="left:88px;top:505px;" width="32" height="20"><rect x="1" y="1" width="30" height="18" fill="#272727"/></svg>
<svg class="b" style="left:88px;top:521px;" width="32" height="4"><rect x="1" y="1.4" width="30" height="1.6" fill="#1f9c85"/></svg>
<span class="t" style="left:99.27px;top:511px;font-size:7.2px;line-height:9px;color:#fff;transform:scaleX(0.9053);transform-origin:0 50%;">ČR</span>
<span class="t" style="left:113.2px;top:509px;font-size:5.5px;line-height:6px;color:#ddd;font-weight:700;">x</span>
<span class="t" style="left:129.29px;top:513px;font-size:6.6px;line-height:7px;color:#e8e8e8;transform:scaleX(0.9611);transform-origin:0 50%;">Evropa</span>
<svg class="b" style="left:159px;top:505px;" width="24" height="20"><rect x="1.2" y="1" width="21" height="18" fill="#2aa58c"/></svg>
<svg class="b" style="left:160.2px;top:506px;" width="21" height="18" viewBox="0 0 21 18"><path d="M10.5 6.2v5.600M7.700 9h5.600" stroke="#111" stroke-width="1.100"/></svg>
<svg class="b" style="left:-1px;top:-1px;" width="1026" height="22"><rect x="1" y="1" width="1024" height="20" fill="#151515"/></svg>
<span class="t" style="left:10.66px;top:5px;font-size:8.2px;line-height:9px;color:#cfcfcf;transform:scaleX(0.9247);transform-origin:0 50%;">Soubor</span>
<span class="t" style="left:52.51px;top:5px;font-size:8.2px;line-height:9px;color:#f4f4f4;font-weight:700;transform:scaleX(0.9259);transform-origin:0 50%;">Domů</span>
<span class="t" style="left:86px;top:5px;font-size:8.2px;line-height:9px;color:#cfcfcf;transform:scaleX(0.9227);transform-origin:0 50%;">Vložit</span>
<span class="t" style="left:116.38px;top:5px;font-size:8.2px;line-height:9px;color:#cfcfcf;transform:scaleX(0.9473);transform-origin:0 50%;">Modelování</span>
<span class="t" style="left:168.78px;top:5px;font-size:8.2px;line-height:9px;color:#cfcfcf;transform:scaleX(0.9140);transform-origin:0 50%;">Zobrazení</span>
<span class="t" style="left:214.16px;top:5px;font-size:8.2px;line-height:9px;color:#cfcfcf;transform:scaleX(0.9208);transform-origin:0 50%;">Optimalizace</span>
<span class="t" style="left:269.9px;top:5px;font-size:8.2px;line-height:9px;color:#cfcfcf;transform:scaleX(0.9109);transform-origin:0 50%;">Nápověda</span>
<svg class="b" style="left:52px;top:13px;" width="23" height="5"><rect x="1" y="1.8" width="20.5" height="1.6" fill="#1d8d77"/></svg>
<svg class="b" style="left:974px;top:1px;" width="48" height="16"><rect x="1.9" y="1.7" width="45.1" height="12.7" rx="2" fill="#0f7362"/></svg>
<svg class="b" style="left:978.6px;top:4.4px;" width="10" height="10" viewBox="0 0 10 10"><path d="M3.6 3.2H1.4V8.2H7.2V6.4" fill="none" stroke="#a8d2c9" stroke-width="0.65"/><path d="M3.2 6.4c.3-2 1.500-3 3.300-3v-1.700l2.600 2.600-2.600 2.600v-1.700c-1.400 0-2.400.3-3.300 1.200z" fill="none" stroke="#a8d2c9" stroke-width="0.65" stroke-linejoin="round"/></svg>
<span class="t" style="left:992.52px;top:5px;font-size:7.3px;line-height:9px;color:#dcebe7;transform:scaleX(0.8514);transform-origin:0 50%;">Sdílet</span>
<svg class="b" style="left:1010px;top:6px;" width="8" height="6" viewBox="0 0 8 6"><path d="M1.100 1.900L3.600 4.600L6.100 1.900" fill="none" stroke="#dcebe7" stroke-width="0.75"/></svg>
<svg class="b" style="left:2px;top:18px;" width="1020" height="56"><rect x="1.4" y="1.6" width="1016.7" height="53" rx="4.5" fill="#292929"/></svg>
<svg class="b" style="left:94px;top:21px;" width="4" height="51"><rect x="1.8" y="1.5" width="0.6" height="48" fill="#3b3b3b"/></svg>
<svg class="b" style="left:297px;top:21px;" width="4" height="51"><rect x="1.7" y="1.5" width="0.6" height="48" fill="#3b3b3b"/></svg>
<svg class="b" style="left:385px;top:21px;" width="3" height="51"><rect x="1.2" y="1.5" width="0.6" height="48" fill="#3b3b3b"/></svg>
<svg class="b" style="left:467px;top:21px;" width="4" height="51"><rect x="1.5" y="1.5" width="0.6" height="48" fill="#3b3b3b"/></svg>
<svg class="b" style="left:559px;top:21px;" width="4" height="51"><rect x="1.6" y="1.5" width="0.6" height="48" fill="#3b3b3b"/></svg>
<svg class="b" style="left:593px;top:21px;" width="3" height="51"><rect x="1" y="1.5" width="0.6" height="48" fill="#3b3b3b"/></svg>
<svg class="b" style="left:634px;top:21px;" width="3" height="51"><rect x="1" y="1.5" width="0.6" height="48" fill="#3b3b3b"/></svg>
<svg class="b" style="left:665px;top:21px;" width="4" height="51"><rect x="1.6" y="1.5" width="0.6" height="48" fill="#3b3b3b"/></svg>
<span class="t" style="left:10.2px;top:44px;font-size:6.5px;line-height:7px;color:#6a6a6a;">Vložit</span>
<span class="t" style="left:41.7px;top:26px;font-size:6.5px;line-height:7px;color:#6a6a6a;transform:scaleX(1.0156);transform-origin:0 50%;">Vyjmout</span>
<span class="t" style="left:41.18px;top:40px;font-size:6.5px;line-height:7px;color:#6a6a6a;transform:scaleX(0.9927);transform-origin:0 50%;">Kopírovat</span>
<span class="t" style="left:41.18px;top:54px;font-size:6.5px;line-height:7px;color:#6a6a6a;">Kopírovat formát</span>
<span class="t" style="left:38.17px;top:64px;font-size:5.7px;line-height:6px;color:#e8e8e8;transform:scaleX(0.8971);transform-origin:0 50%;">Schránka</span>
<span class="t" style="left:101.72px;top:44px;font-size:6.5px;line-height:7px;color:#f0f0f0;transform:scaleX(0.9437);transform-origin:0 50%;">Získat</span>
<span class="t" style="left:100.55px;top:53px;font-size:6.5px;line-height:7px;color:#f0f0f0;transform:scaleX(0.9424);transform-origin:0 50%;">data</span>
<svg class="b" style="left:112.6px;top:53px;" width="6" height="6" viewBox="0 0 6 6"><path d="M1.4 2.2L3 3.72L4.6 2.2" fill="none" stroke="#ddd" stroke-width="0.6"/></svg>
<span class="t" style="left:121.62px;top:44px;font-size:6.5px;line-height:7px;color:#f0f0f0;transform:scaleX(0.9223);transform-origin:0 50%;">Excelový</span>
<span class="t" style="left:127.85px;top:53px;font-size:6.5px;line-height:7px;color:#f0f0f0;transform:scaleX(0.9322);transform-origin:0 50%;">sešit</span>
<span class="t" style="left:147.68px;top:44px;font-size:6.5px;line-height:7px;color:#f0f0f0;">Datové centrum</span>
<span class="t" style="left:154.83px;top:53px;font-size:6.5px;line-height:7px;color:#f0f0f0;transform:scaleX(0.9328);transform-origin:0 50%;">OneLake</span>
<svg class="b" style="left:179.6px;top:53px;" width="6" height="6" viewBox="0 0 6 6"><path d="M1.4 2.2L3 3.72L4.6 2.2" fill="none" stroke="#ddd" stroke-width="0.6"/></svg>
<span class="t" style="left:199.43px;top:44px;font-size:6.5px;line-height:7px;color:#f0f0f0;transform:scaleX(0.9351);transform-origin:0 50%;">SQL</span>
<span class="t" style="left:196.02px;top:53px;font-size:6.5px;line-height:7px;color:#f0f0f0;transform:scaleX(0.9545);transform-origin:0 50%;">Server</span>
<span class="t" style="left:218.41px;top:44px;font-size:6.5px;line-height:7px;color:#f0f0f0;transform:scaleX(0.9749);transform-origin:0 50%;">Zadat</span>
<span class="t" style="left:219.93px;top:53px;font-size:6.5px;line-height:7px;color:#f0f0f0;transform:scaleX(1.0310);transform-origin:0 50%;">data</span>
<span class="t" style="left:238.11px;top:44px;font-size:6.5px;line-height:7px;color:#f0f0f0;transform:scaleX(0.9435);transform-origin:0 50%;">Dataverse</span>
<span class="t" style="left:268.4px;top:44px;font-size:6.5px;line-height:7px;color:#f0f0f0;transform:scaleX(0.9570);transform-origin:0 50%;">Poslední</span>
<span class="t" style="left:267.84px;top:53px;font-size:6.5px;line-height:7px;color:#f0f0f0;">zdroje</span>
<svg class="b" style="left:285.7px;top:53px;" width="6" height="6" viewBox="0 0 6 6"><path d="M1.4 2.2L3 3.72L4.6 2.2" fill="none" stroke="#ddd" stroke-width="0.6"/></svg>
<span class="t" style="left:190.67px;top:64px;font-size:5.7px;line-height:6px;color:#e8e8e8;transform:scaleX(0.9483);transform-origin:0 50%;">Data</span>
<span class="t" style="left:303.68px;top:44px;font-size:6.5px;line-height:7px;color:#f0f0f0;transform:scaleX(0.9614);transform-origin:0 50%;">Transformovat</span>
<span class="t" style="left:313.85px;top:53px;font-size:6.5px;line-height:7px;color:#f0f0f0;transform:scaleX(0.9585);transform-origin:0 50%;">data</span>
<svg class="b" style="left:326.4px;top:53px;" width="6" height="6" viewBox="0 0 6 6"><path d="M1.4 2.2L3 3.72L4.6 2.2" fill="none" stroke="#ddd" stroke-width="0.6"/></svg>
<span class="t" style="left:346.4px;top:44px;font-size:6.5px;line-height:7px;color:#f0f0f0;transform:scaleX(0.9819);transform-origin:0 50%;">Aktualizovat</span>
<span class="t" style="left:333.57px;top:64px;font-size:5.7px;line-height:6px;color:#e8e8e8;transform:scaleX(0.9496);transform-origin:0 50%;">Dotazy</span>
<span class="t" style="left:393.55px;top:44px;font-size:6.5px;line-height:7px;color:#f0f0f0;transform:scaleX(1.0490);transform-origin:0 50%;">Nový</span>
<span class="t" style="left:393.4px;top:53px;font-size:6.5px;line-height:7px;color:#f0f0f0;transform:scaleX(1.0113);transform-origin:0 50%;">vizuál</span>
<span class="t" style="left:413.48px;top:44px;font-size:6.5px;line-height:7px;color:#f0f0f0;transform:scaleX(0.9544);transform-origin:0 50%;">Textové</span>
<span class="t" style="left:417.49px;top:53px;font-size:6.5px;line-height:7px;color:#f0f0f0;transform:scaleX(1.0400);transform-origin:0 50%;">pole</span>
<span class="t" style="left:442.28px;top:44px;font-size:6.5px;line-height:7px;color:#f0f0f0;transform:scaleX(0.9953);transform-origin:0 50%;">Další</span>
<span class="t" style="left:436.7px;top:53px;font-size:6.5px;line-height:7px;color:#f0f0f0;transform:scaleX(0.9417);transform-origin:0 50%;">vizuály</span>
<svg class="b" style="left:455.6px;top:53px;" width="6" height="6" viewBox="0 0 6 6"><path d="M1.4 2.2L3 3.72L4.6 2.2" fill="none" stroke="#ddd" stroke-width="0.6"/></svg>
<span class="t" style="left:420.2px;top:64px;font-size:5.7px;line-height:6px;color:#e8e8e8;transform:scaleX(0.9830);transform-origin:0 50%;">Vložit</span>
<span class="t" style="left:473.39px;top:44px;font-size:6.5px;line-height:7px;color:#6a6a6a;transform:scaleX(0.9901);transform-origin:0 50%;">Nový výpočet</span>
<span class="t" style="left:479.7px;top:53px;font-size:6.5px;line-height:7px;color:#6a6a6a;transform:scaleX(0.9549);transform-origin:0 50%;">vizuálu</span>
<svg class="b" style="left:498.8px;top:53px;" width="6" height="6" viewBox="0 0 6 6"><path d="M1.4 2.2L3 3.72L4.6 2.2" fill="none" stroke="#6a6a6a" stroke-width="0.6"/></svg>
<span class="t" style="left:516.29px;top:44px;font-size:6.5px;line-height:7px;color:#f0f0f0;transform:scaleX(0.9735);transform-origin:0 50%;">Nová</span>
<span class="t" style="left:517.39px;top:53px;font-size:6.5px;line-height:7px;color:#f0f0f0;transform:scaleX(0.9754);transform-origin:0 50%;">míra</span>
<span class="t" style="left:535.71px;top:44px;font-size:6.5px;line-height:7px;color:#f0f0f0;transform:scaleX(0.9396);transform-origin:0 50%;">Rychlá</span>
<span class="t" style="left:538.69px;top:53px;font-size:6.5px;line-height:7px;color:#f0f0f0;transform:scaleX(0.9754);transform-origin:0 50%;">míra</span>
<span class="t" style="left:504.4px;top:64px;font-size:5.7px;line-height:6px;color:#e8e8e8;transform:scaleX(0.9673);transform-origin:0 50%;">Výpočty</span>
<span class="t" style="left:565.57px;top:45px;font-size:6.5px;line-height:7px;color:#6a6a6a;transform:scaleX(1.0033);transform-origin:0 50%;">Citlivost</span>
<svg class="b" style="left:573.8px;top:53.3px;" width="6" height="6" viewBox="0 0 6 6"><path d="M1.4 2.2L3 3.72L4.6 2.2" fill="none" stroke="#6a6a6a" stroke-width="0.6"/></svg>
<span class="t" style="left:567.73px;top:64px;font-size:5.7px;line-height:6px;color:#e8e8e8;transform:scaleX(0.9560);transform-origin:0 50%;">Citlivost</span>
<span class="t" style="left:599.28px;top:45px;font-size:6.5px;line-height:7px;color:#f0f0f0;transform:scaleX(1.0087);transform-origin:0 50%;">Publikovat</span>
<span class="t" style="left:607.56px;top:64px;font-size:5.7px;line-height:6px;color:#e8e8e8;transform:scaleX(0.9226);transform-origin:0 50%;">Sdílet</span>
<span class="t" style="left:639.96px;top:45px;font-size:6.5px;line-height:7px;color:#f0f0f0;transform:scaleX(1.0407);transform-origin:0 50%;">Copilot</span>
<span class="t" style="left:641.71px;top:64px;font-size:5.7px;line-height:6px;color:#e8e8e8;transform:scaleX(1.0033);transform-origin:0 50%;">Copilot</span>
<svg class="b" style="left:1009.5px;top:63px;" width="6" height="6" viewBox="0 0 6 6"><path d="M1 4.2L3 2.2L5 4.2" fill="none" stroke="#f0f0f0" stroke-width="0.9"/></svg>
<svg class="b" style="left:0px;top:0px;" width="1024" height="80" viewBox="0 0 1024 80"><path d="M19.2 28.2H12.6V39.6H19.2" fill="none" stroke="#9a6a2c" stroke-width="1"/><path d="M21.5 28.2H24V31" fill="none" stroke="#9a6a2c" stroke-width="1"/><path d="M15.2 28.6v-1.4h1.7a1.4 1.4 0 0 1 2.8 0h1.7v1.4z" fill="none" stroke="#6a6a6a" stroke-width="0.7"/><rect x="19.9" y="31.5" width="6.6" height="9.2" fill="#292929" stroke="#6e6e6e" stroke-width="0.75"/><path d="M33 25.4L36.6 31.2M37.2 25.4L33.6 31.2" stroke="#777" stroke-width="0.7" fill="none"/><circle cx="33.4" cy="32.2" r="1.1" fill="#2b5f84"/><circle cx="36.8" cy="32.2" r="1.1" fill="#2b5f84"/><path d="M33.6 38.4h-2.3v7.6h2.3" fill="none" stroke="#666" stroke-width="0.7"/><path d="M33.8 39.2h3.4l2.3 2.3v5.1h-5.7z" fill="none" stroke="#666" stroke-width="0.7"/><path d="M37 39.4v2.3h2.3" fill="none" stroke="#666" stroke-width="0.6"/><path d="M31.4 56.2L36.4 53.4L38.8 57.6L34.6 60z" fill="#8a6a3a" stroke="#9a7a48" stroke-width="0.5"/><path d="M36.6 53.6L39.2 51.8" stroke="#777" stroke-width="1.2"/><path d="M104.4 27.76v10.07a5.6 2.46 0 0 0 11.2 0v-10.07" fill="none" stroke="#b8b8b8" stroke-width="0.75"/><ellipse cx="110" cy="27.76" rx="5.6" ry="2.46" fill="none" stroke="#b8b8b8" stroke-width="0.75"/><rect x="110.4" y="31.8" width="8.8" height="9.4" fill="#292929"/><rect x="110.6" y="32" width="8.4" height="9" fill="none" stroke="#b8b8b8" stroke-width="0.75"/><path d="M113.4 34.25V41" stroke="#b8b8b8" stroke-width="0.6000000000000001"/><path d="M116.2 34.25V41" stroke="#b8b8b8" stroke-width="0.6000000000000001"/><path d="M110.6 34.25H119" stroke="#b8b8b8" stroke-width="0.6000000000000001"/><path d="M110.6 36.5H119" stroke="#b8b8b8" stroke-width="0.6000000000000001"/><path d="M110.6 38.75H119" stroke="#b8b8b8" stroke-width="0.6000000000000001"/><path d="M128.6 25.3h7.6l3.6 3.6v11.6h-11.2z" fill="none" stroke="#b8b8b8" stroke-width="0.75"/><path d="M136.2 25.3v3.6h3.6" fill="none" stroke="#b8b8b8" stroke-width="0.75"/><rect x="135.2" y="33.8" width="7.4" height="7.2" fill="#1e8a45"/><path d="M137.4 35.6L140.4 39.4M140.4 35.6L137.4 39.4" stroke="#fff" stroke-width="1"/><circle cx="170.4" cy="32.1" r="7.200" fill="#dedede"/><circle cx="172.8" cy="33.9" r="5.900" fill="#292929" stroke="#c4c4c4" stroke-width="0.850"/><path d="M169.600 29.600c0.300 2.900 1.500 5.200 3.300 6.800M167.200 38.200c3.700 0 7.700-1 11-3.900" fill="none" stroke="#bcbcbc" stroke-width="0.750"/><path d="M199 25.3h7.6l3.6 3.6v11.6h-11.2z" fill="none" stroke="#b8b8b8" stroke-width="0.75"/><path d="M206.6 25.3v3.6h3.6" fill="none" stroke="#b8b8b8" stroke-width="0.75"/><rect x="206" y="31" width="8.2" height="10.4" fill="#292929"/><path d="M206.6 33.14v6.52a3.5 1.54 0 0 0 7 0v-6.52" fill="none" stroke="#c28a4a" stroke-width="0.75"/><ellipse cx="210.1" cy="33.14" rx="3.5" ry="1.54" fill="none" stroke="#c28a4a" stroke-width="0.75"/><rect x="219.4" y="25.6" width="14.2" height="14.6" fill="none" stroke="#b8b8b8" stroke-width="0.75"/><path d="M224.13 29.25V40.2" stroke="#b8b8b8" stroke-width="0.6000000000000001"/><path d="M228.87 29.25V40.2" stroke="#b8b8b8" stroke-width="0.6000000000000001"/><path d="M219.4 29.25H233.6" stroke="#b8b8b8" stroke-width="0.6000000000000001"/><path d="M219.4 32.9H233.6" stroke="#b8b8b8" stroke-width="0.6000000000000001"/><path d="M219.4 36.55H233.6" stroke="#b8b8b8" stroke-width="0.6000000000000001"/><rect x="217.6" y="23.8" width="8.6" height="8.2" fill="#292929"/><path d="M222 24V31.8M218 27.9H226" stroke="#3fae5f" stroke-width="1.1"/><path d="M246 35.6c-3-4 2-9.6 8.6-9.4c6 0.2 5.6 6.6 0.6 8.2c-3.4 1-5.4-2.4-2.4-3.6" fill="none" stroke="#b8b8b8" stroke-width="0.9"/><path d="M258 29c3 4-2 9.6-8.6 9.4c-6-0.2-5.6-6.6-0.6-8.2c3.4-1 5.4 2.4 2.4 3.6" fill="none" stroke="#b8b8b8" stroke-width="0.9"/><path d="M274.2 25.3h7.6l3.6 3.6v11.6h-11.2z" fill="none" stroke="#b8b8b8" stroke-width="0.75"/><path d="M281.8 25.3v3.6h3.6" fill="none" stroke="#b8b8b8" stroke-width="0.75"/><circle cx="284.9" cy="37.2" r="4.4" fill="#292929"/><circle cx="284.9" cy="37.2" r="3.7" fill="none" stroke="#3a8cc8" stroke-width="0.8"/><path d="M284.9 35v2.3h1.8" fill="none" stroke="#999" stroke-width="0.6"/><rect x="316.4" y="25.7" width="14.6" height="15" fill="none" stroke="#b8b8b8" stroke-width="0.75"/><path d="M321.27 29.45V40.7" stroke="#b8b8b8" stroke-width="0.6000000000000001"/><path d="M326.13 29.45V40.7" stroke="#b8b8b8" stroke-width="0.6000000000000001"/><path d="M316.4 29.45H331" stroke="#b8b8b8" stroke-width="0.6000000000000001"/><path d="M316.4 33.2H331" stroke="#b8b8b8" stroke-width="0.6000000000000001"/><path d="M316.4 36.95H331" stroke="#b8b8b8" stroke-width="0.6000000000000001"/><rect x="316.4" y="25.7" width="14.6" height="2.6" fill="#8a8a8a"/><path d="M330.6 29.6l1.6 1.6l-9 9l-2.6 1l1-2.6z" fill="#292929" stroke="#3a92d6" stroke-width="0.8" stroke-linejoin="round"/><path d="M320.6 41.2l1-2.6l1.6 1.6z" fill="#3a92d6"/><path d="M357.4 25.3h7.6l3.6 3.6v11.6h-11.2z" fill="none" stroke="#b8b8b8" stroke-width="0.75"/><path d="M365 25.3v3.6h3.6" fill="none" stroke="#b8b8b8" stroke-width="0.75"/><circle cx="368.1" cy="37.6" r="4.6" fill="#292929"/><path d="M364.8 37a3.4 3.4 0 0 1 6-1.6M371.4 38.2a3.4 3.4 0 0 1-6 1.6" fill="none" stroke="#3fae5f" stroke-width="0.8"/><path d="M371.2 33.6v2.2h-2.2M365 41.6v-2.2h2.2" fill="none" stroke="#3fae5f" stroke-width="0.7"/><rect x="399" y="25.6" width="4.6" height="15" rx="1" fill="none" stroke="#b8b8b8" stroke-width="0.75"/><rect x="403.8" y="28.2" width="3.8" height="12.4" fill="#7a7a7a"/><rect x="394.5" y="31.4" width="4.4" height="9.2" rx="0.6" fill="#1f7fd4"/><path d="M405.8 33.4V41.6M401.8 37.5H409.8" stroke="#4cb866" stroke-width="1"/><rect x="416.2" y="26.8" width="15.4" height="12.4" fill="none" stroke="#9a9a9a" stroke-width="0.8"/><rect x="415.4" y="26" width="1.6" height="1.6" fill="#3a92d6"/><rect x="430.8" y="26" width="1.6" height="1.6" fill="#3a92d6"/><rect x="415.4" y="38.4" width="1.6" height="1.6" fill="#3a92d6"/><rect x="430.8" y="38.4" width="1.6" height="1.6" fill="#3a92d6"/><path d="M421.4 36.8L423.9 29.8L426.4 36.8M422.3 34.5H425.5" fill="none" stroke="#3a92d6" stroke-width="0.9"/><rect x="442.6" y="31.4" width="4.4" height="9.2" rx="0.8" fill="none" stroke="#b8b8b8" stroke-width="0.75"/><rect x="447" y="25.6" width="4.6" height="15" rx="1" fill="none" stroke="#b8b8b8" stroke-width="0.75"/><rect x="451.6" y="28.2" width="4.4" height="12.4" rx="0.8" fill="none" stroke="#b8b8b8" stroke-width="0.75"/><path d="M456.4 30.4l1.6 1.6l-8.6 8.6l-2.6 1l1-2.6z" fill="#292929" stroke="#3a92d6" stroke-width="0.8" stroke-linejoin="round"/><path d="M446.8 41.6l1-2.6l1.6 1.6z" fill="#3a92d6"/><rect x="486.2" y="31.4" width="3.6" height="9.2" fill="#4a4a4a"/><rect x="490.2" y="25.6" width="4.2" height="15" rx="1" fill="none" stroke="#4a4a4a" stroke-width="0.75"/><rect x="495" y="28.2" width="4.2" height="4" fill="#1d4d7a"/><path d="M493 41c1.6 0 1.8-1.6 2.2-4s0.6-4 2.4-4M494 36h3M496.8 37l3 3.4M499.8 37l-3 3.4" fill="none" stroke="#5a5a5a" stroke-width="0.7"/><rect x="518.2" y="25.4" width="10.6" height="15.4" rx="1" fill="none" stroke="#b8b8b8" stroke-width="0.8"/><rect x="520" y="27.6" width="7" height="2.4" fill="#1f7fd4"/><rect x="520.1" y="31.7" width="1.5" height="1.5" fill="#d0d0d0"/><rect x="522.75" y="31.7" width="1.5" height="1.5" fill="#d0d0d0"/><rect x="525.4" y="31.7" width="1.5" height="1.5" fill="#d0d0d0"/><rect x="520.1" y="34.7" width="1.5" height="1.5" fill="#d0d0d0"/><rect x="522.75" y="34.7" width="1.5" height="1.5" fill="#d0d0d0"/><rect x="525.4" y="34.7" width="1.5" height="1.5" fill="#d0d0d0"/><rect x="520.1" y="37.7" width="1.5" height="1.5" fill="#d0d0d0"/><rect x="522.75" y="37.7" width="1.5" height="1.5" fill="#d0d0d0"/><rect x="525.4" y="37.7" width="1.5" height="1.5" fill="#d0d0d0"/><rect x="539.8" y="25.4" width="10.2" height="15.4" rx="1" fill="none" stroke="#b8b8b8" stroke-width="0.8"/><rect x="541.6" y="27.6" width="6.6" height="2.4" fill="#8a8a8a"/><rect x="541.7" y="31.7" width="1.5" height="1.5" fill="#d0d0d0"/><rect x="544.15" y="31.7" width="1.5" height="1.5" fill="#d0d0d0"/><rect x="546.6" y="31.7" width="1.5" height="1.5" fill="#d0d0d0"/><rect x="541.7" y="34.7" width="1.5" height="1.5" fill="#d0d0d0"/><rect x="544.15" y="34.7" width="1.5" height="1.5" fill="#d0d0d0"/><rect x="546.6" y="34.7" width="1.5" height="1.5" fill="#d0d0d0"/><rect x="541.7" y="37.7" width="1.5" height="1.5" fill="#d0d0d0"/><rect x="544.15" y="37.7" width="1.5" height="1.5" fill="#d0d0d0"/><rect x="546.6" y="37.7" width="1.5" height="1.5" fill="#d0d0d0"/><path d="M539.4 24.2h3.4l-1.3 3.9h2.3l-5.600 7.500l1.200-5h-2.300z" fill="#f0a52e" stroke="#292929" stroke-width="0.5"/><path d="M577 25.6h-5.8v15.2h10.4v-7" fill="none" stroke="#1d4d66" stroke-width="0.9"/><path d="M573 31.4l5.6-4.6l4.6 5.4l-5.6 4.6z" fill="#24566f"/><path d="M580 25.6l2-1.2l3.2 3.6l-1.6 2.2z" fill="none" stroke="#2a6380" stroke-width="0.8"/><rect x="608.4" y="34.6" width="4.6" height="5.6" rx="0.8" fill="none" stroke="#b8b8b8" stroke-width="0.75"/><rect x="613" y="30.2" width="4.6" height="10" rx="0.8" fill="none" stroke="#b8b8b8" stroke-width="0.75"/><path d="M613 30.4v-3.2a1 1 0 0 1 1-1h4.8a1 1 0 0 1 1 1v5" fill="none" stroke="#b8b8b8" stroke-width="0.75"/><path d="M619.6 41.6v-8.4M616.4 36.2l3.2-3.2l3.2 3.2" fill="none" stroke="#3a92d6" stroke-width="0.8"/></svg>
<svg class="b" style="left:642.4px;top:25.6px;" width="16.8" height="14.8" viewBox="0 0 16.8 14.8"><defs><linearGradient id="cg1" x1="0" y1="0" x2="0" y2="1"><stop offset="0" stop-color="#1c9bf2"/><stop offset="0.45" stop-color="#2fb8a0"/><stop offset="0.75" stop-color="#a8d040"/><stop offset="1" stop-color="#f8cc1c"/></linearGradient><linearGradient id="cg2" x1="0" y1="0" x2="0" y2="1"><stop offset="0" stop-color="#b565ee"/><stop offset="0.5" stop-color="#ee5590"/><stop offset="1" stop-color="#ffa040"/></linearGradient></defs><path d="M8.6 0.3h2.600c1.300 0 2 0.900 1.900 2.200l-0.200 1.400h-4.300z" fill="#1a58cc"/><path d="M6 11.100l-0.400 1.400c-0.300 1.300 0.300 2.200 1.600 2.200h2.200v-3.600z" fill="#f2502c"/><path d="M4.300 0.300h5.200c1.200 0 1.700 0.800 1.400 2l-2 7c-0.400 1.300-1.100 1.900-2.400 1.900h-4.200c-1.500 0-2.200-0.900-1.800-2.400l1.400-6c0.400-1.600 1.100-2.500 2.400-2.500z" fill="url(#cg1)"/><path d="M10.800 3.800h4.300c1.500 0 2.200 0.900 1.800 2.400l-1.500 6c-0.400 1.600-1.100 2.500-2.400 2.500h-5.100c-1.200 0-1.700-0.800-1.400-2l2-7c0.400-1.300 1-1.900 2.300-1.900z" fill="url(#cg2)"/><path d="M8.500 4.600l-1.700 6h1.500l1.700-6z" fill="#20242c" opacity="0.85"/></svg>
</div>
</body>
</html>
